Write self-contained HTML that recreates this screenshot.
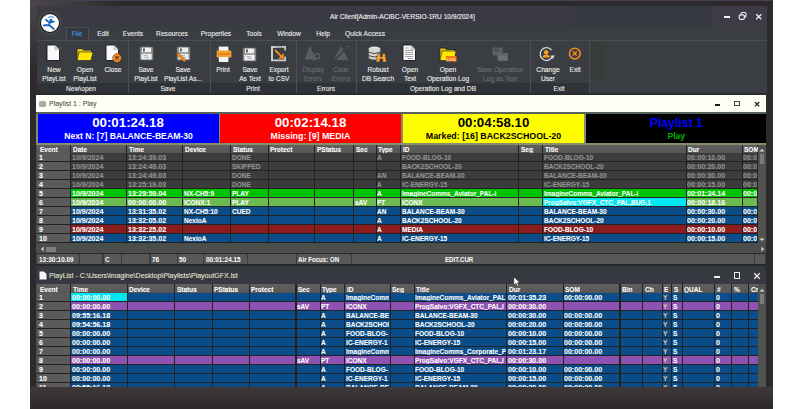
<!DOCTYPE html><html><head><meta charset="utf-8"><style>*{margin:0;padding:0}
html,body{width:800px;height:409px;overflow:hidden;background:#fff}
body{position:relative;font-family:"Liberation Sans",sans-serif}
.a{position:absolute}
.t{position:absolute;white-space:nowrap;line-height:1}
.cl{position:absolute;overflow:hidden}
.c{position:absolute;white-space:nowrap;line-height:1;transform-origin:0 0}
</style></head><body><div class="a" style="left:30px;top:0px;width:743px;height:409px;background:#2e2a2b"></div>
<div class="a" style="left:30px;top:0px;width:120px;height:80px;background:radial-gradient(ellipse 90px 70px at 0 0,#4a4649 0%,#403c3e 45%,#2e2a2b 100%)"></div>
<div class="a" style="left:30px;top:0px;width:743px;height:1px;background:#45414a"></div>
<div class="a" style="left:36.5px;top:5.5px;width:730.5px;height:89px;background:#3a3d42"></div>
<div class="a" style="left:36.5px;top:5.5px;width:730.5px;height:21.5px;background:#3a3a44"></div>
<div class="a" style="left:573.5px;top:5.5px;width:137px;height:21.5px;background:#353a41"></div>
<div class="a" style="left:37.5px;top:10.5px;width:24px;height:24px;background:#47484d;border-radius:50%"></div>
<div class="a" style="left:39.5px;top:12.5px;width:20px;height:20px;background:#151515;border-radius:50%"></div>
<div class="a" style="left:40.5px;top:13.5px;width:18px;height:18px;background:#fbfbfb;border-radius:50%"><svg width="18" height="18" viewBox="0 0 18 18"><path d="M7 3.6 Q10 1.6 13 3.8" stroke="#5aa6e6" stroke-width="1.1" fill="none"/><circle cx="9.9" cy="6.2" r="1.4" fill="#1b64c0"/><path d="M5 5.8 L8.3 8.6 L12.8 7.6 M9.4 7.6 L8 11 L2.8 11.3 M8 11 L12.8 15" stroke="#1b64c0" stroke-width="1.8" fill="none" stroke-linecap="round" stroke-linejoin="round"/></svg></div>
<div class="t" style="left:330px;top:12.5px;color:#f2f2f2;font-size:7.4px;-webkit-text-stroke:0.12px currentColor;transform:scaleX(0.89);transform-origin:0 0">Air Client[Admin-ACIBC-VERSIO-1RU 10/9/2024]</div>
<div class="a" style="left:710.5px;top:5.5px;width:56.5px;height:21.5px;background:#3c3b46"></div>
<div class="a" style="left:723.5px;top:15.8px;width:6.5px;height:1.8px;background:#f2f2f2"></div>
<svg class="a" style="left:737.5px;top:11px" width="10" height="10" viewBox="0 0 10 10"><rect x="3" y="1.5" width="5" height="4.5" rx="1.2" stroke="#eee" stroke-width="1.2" fill="none"/><rect x="1.3" y="3.8" width="5" height="4.5" rx="1.2" stroke="#eee" stroke-width="1.2" fill="#3d3c46"/></svg>
<svg class="a" style="left:754px;top:11.5px" width="10" height="10" viewBox="0 0 10 10"><path d="M2.2 2.2 L7.3 7.3 M7.3 2.2 L2.2 7.3" stroke="#f0f0f0" stroke-width="1.3"/></svg>
<div class="a" style="left:65.5px;top:27px;width:23px;height:13px;background:#363a40;border:1px solid #4b4f55;border-bottom:none;box-sizing:border-box"></div>
<div class="t" style="left:37px;top:30.2px;width:80px;text-align:center;color:#3d9ae0;font-size:7.4px;-webkit-text-stroke:0.12px currentColor;transform:scaleX(0.9);transform-origin:50% 0">File</div>
<div class="t" style="left:62.5px;top:30.2px;width:80px;text-align:center;color:#ececec;font-size:7.4px;-webkit-text-stroke:0.12px currentColor;transform:scaleX(0.9);transform-origin:50% 0">Edit</div>
<div class="t" style="left:92.5px;top:30.2px;width:80px;text-align:center;color:#ececec;font-size:7.4px;-webkit-text-stroke:0.12px currentColor;transform:scaleX(0.9);transform-origin:50% 0">Events</div>
<div class="t" style="left:131.5px;top:30.2px;width:80px;text-align:center;color:#ececec;font-size:7.4px;-webkit-text-stroke:0.12px currentColor;transform:scaleX(0.9);transform-origin:50% 0">Resources</div>
<div class="t" style="left:176px;top:30.2px;width:80px;text-align:center;color:#ececec;font-size:7.4px;-webkit-text-stroke:0.12px currentColor;transform:scaleX(0.9);transform-origin:50% 0">Properties</div>
<div class="t" style="left:213.5px;top:30.2px;width:80px;text-align:center;color:#ececec;font-size:7.4px;-webkit-text-stroke:0.12px currentColor;transform:scaleX(0.9);transform-origin:50% 0">Tools</div>
<div class="t" style="left:248.5px;top:30.2px;width:80px;text-align:center;color:#ececec;font-size:7.4px;-webkit-text-stroke:0.12px currentColor;transform:scaleX(0.9);transform-origin:50% 0">Window</div>
<div class="t" style="left:283px;top:30.2px;width:80px;text-align:center;color:#ececec;font-size:7.4px;-webkit-text-stroke:0.12px currentColor;transform:scaleX(0.9);transform-origin:50% 0">Help</div>
<div class="t" style="left:324.5px;top:30.2px;width:80px;text-align:center;color:#ececec;font-size:7.4px;-webkit-text-stroke:0.12px currentColor;transform:scaleX(0.9);transform-origin:50% 0">Quick Access</div>
<div class="a" style="left:36.5px;top:39.5px;width:730.5px;height:1px;background:#4b4e54"></div>
<div class="a" style="left:590px;top:42px;width:15px;height:38px;background:#383d3a"></div>
<div class="a" style="left:36.5px;top:82.5px;width:552.5px;height:10.5px;background:#2f3237"></div>
<div class="a" style="left:128px;top:40.5px;width:1px;height:52.5px;background:#4c4f55"></div>
<div class="a" style="left:210px;top:40.5px;width:1px;height:52.5px;background:#4c4f55"></div>
<div class="a" style="left:296px;top:40.5px;width:1px;height:52.5px;background:#4c4f55"></div>
<div class="a" style="left:356px;top:40.5px;width:1px;height:52.5px;background:#4c4f55"></div>
<div class="a" style="left:530px;top:40.5px;width:1px;height:52.5px;background:#4c4f55"></div>
<div class="a" style="left:588.5px;top:40.5px;width:1px;height:52.5px;background:#4c4f55"></div>
<div class="a" style="left:36.5px;top:93px;width:730.5px;height:2px;background:#292b2f"></div>
<div class="t" style="left:21px;top:85px;width:120px;text-align:center;color:#ececec;font-size:7.4px;-webkit-text-stroke:0.12px currentColor;transform:scaleX(0.9);transform-origin:50% 0">New\open</div>
<div class="t" style="left:108px;top:85px;width:120px;text-align:center;color:#ececec;font-size:7.4px;-webkit-text-stroke:0.12px currentColor;transform:scaleX(0.9);transform-origin:50% 0">Save</div>
<div class="t" style="left:193px;top:85px;width:120px;text-align:center;color:#ececec;font-size:7.4px;-webkit-text-stroke:0.12px currentColor;transform:scaleX(0.9);transform-origin:50% 0">Print</div>
<div class="t" style="left:266px;top:85px;width:120px;text-align:center;color:#ececec;font-size:7.4px;-webkit-text-stroke:0.12px currentColor;transform:scaleX(0.9);transform-origin:50% 0">Errors</div>
<div class="t" style="left:382.5px;top:85px;width:120px;text-align:center;color:#ececec;font-size:7.4px;-webkit-text-stroke:0.12px currentColor;transform:scaleX(0.9);transform-origin:50% 0">Operation Log and DB</div>
<div class="t" style="left:499px;top:85px;width:120px;text-align:center;color:#ececec;font-size:7.4px;-webkit-text-stroke:0.12px currentColor;transform:scaleX(0.9);transform-origin:50% 0">Exit</div>
<div class="t" style="left:14px;top:66px;width:80px;text-align:center;color:#f0f0f0;line-height:8.5px;font-size:7.4px;-webkit-text-stroke:0.12px currentColor;transform:scaleX(0.9);transform-origin:50% 0">New<br>PlayList</div>
<div class="t" style="left:45px;top:66px;width:80px;text-align:center;color:#f0f0f0;line-height:8.5px;font-size:7.4px;-webkit-text-stroke:0.12px currentColor;transform:scaleX(0.9);transform-origin:50% 0">Open<br>PlayList</div>
<div class="t" style="left:72.5px;top:66px;width:80px;text-align:center;color:#f0f0f0;line-height:8.5px;font-size:7.4px;-webkit-text-stroke:0.12px currentColor;transform:scaleX(0.9);transform-origin:50% 0">Close</div>
<div class="t" style="left:106px;top:66px;width:80px;text-align:center;color:#f0f0f0;line-height:8.5px;font-size:7.4px;-webkit-text-stroke:0.12px currentColor;transform:scaleX(0.9);transform-origin:50% 0">Save<br>PlayList</div>
<div class="t" style="left:143px;top:66px;width:80px;text-align:center;color:#f0f0f0;line-height:8.5px;font-size:7.4px;-webkit-text-stroke:0.12px currentColor;transform:scaleX(0.9);transform-origin:50% 0">Save<br>PlayList As...</div>
<div class="t" style="left:183px;top:66px;width:80px;text-align:center;color:#f0f0f0;line-height:8.5px;font-size:7.4px;-webkit-text-stroke:0.12px currentColor;transform:scaleX(0.9);transform-origin:50% 0">Print</div>
<div class="t" style="left:209.5px;top:66px;width:80px;text-align:center;color:#f0f0f0;line-height:8.5px;font-size:7.4px;-webkit-text-stroke:0.12px currentColor;transform:scaleX(0.9);transform-origin:50% 0">Save<br>As Text</div>
<div class="t" style="left:239px;top:66px;width:80px;text-align:center;color:#f0f0f0;line-height:8.5px;font-size:7.4px;-webkit-text-stroke:0.12px currentColor;transform:scaleX(0.9);transform-origin:50% 0">Export<br>to CSV</div>
<div class="t" style="left:272.5px;top:66px;width:80px;text-align:center;color:#6c6f74;line-height:8.5px;font-size:7.4px;-webkit-text-stroke:0.12px currentColor;transform:scaleX(0.9);transform-origin:50% 0">Display<br>Errors</div>
<div class="t" style="left:301px;top:66px;width:80px;text-align:center;color:#6c6f74;line-height:8.5px;font-size:7.4px;-webkit-text-stroke:0.12px currentColor;transform:scaleX(0.9);transform-origin:50% 0">Clear<br>Errors</div>
<div class="t" style="left:337.5px;top:66px;width:80px;text-align:center;color:#f0f0f0;line-height:8.5px;font-size:7.4px;-webkit-text-stroke:0.12px currentColor;transform:scaleX(0.9);transform-origin:50% 0">Robust<br>DB Search</div>
<div class="t" style="left:369.5px;top:66px;width:80px;text-align:center;color:#f0f0f0;line-height:8.5px;font-size:7.4px;-webkit-text-stroke:0.12px currentColor;transform:scaleX(0.9);transform-origin:50% 0">Open<br>Text</div>
<div class="t" style="left:407.5px;top:66px;width:80px;text-align:center;color:#f0f0f0;line-height:8.5px;font-size:7.4px;-webkit-text-stroke:0.12px currentColor;transform:scaleX(0.9);transform-origin:50% 0">Open<br>Operation Log</div>
<div class="t" style="left:460px;top:66px;width:80px;text-align:center;color:#6c6f74;line-height:8.5px;font-size:7.4px;-webkit-text-stroke:0.12px currentColor;transform:scaleX(0.9);transform-origin:50% 0">Save Operation<br>Log as Text</div>
<div class="t" style="left:507.5px;top:66px;width:80px;text-align:center;color:#f0f0f0;line-height:8.5px;font-size:7.4px;-webkit-text-stroke:0.12px currentColor;transform:scaleX(0.9);transform-origin:50% 0">Change<br>User</div>
<div class="t" style="left:534.5px;top:66px;width:80px;text-align:center;color:#f0f0f0;line-height:8.5px;font-size:7.4px;-webkit-text-stroke:0.12px currentColor;transform:scaleX(0.9);transform-origin:50% 0">Exit</div>
<svg class="a" style="left:46px;top:44px" width="15" height="18" viewBox="0 0 15 18"><path d="M1 1 H9 L13.5 5.5 V16.5 H1 Z" fill="#fafafa" stroke="#161616" stroke-width="0.9"/><path d="M9 1 V5.5 H13.5" fill="#d8d8d8" stroke="#9a9a9a" stroke-width="0.5"/></svg>
<svg class="a" style="left:76px;top:46.5px" width="18" height="15" viewBox="0 0 18 15"><path d="M1 1.5 H6 L7.5 3 H15.5 V13.5 H1 Z" fill="#e6c200" stroke="#1a1a48" stroke-width="0.8"/><path d="M3 5 H17 L15 13.5 H1.2 Z" fill="#ffe800" stroke="#1a1a48" stroke-width="0.6"/></svg>
<svg class="a" style="left:104.5px;top:43.5px" width="18" height="19" viewBox="0 0 18 19"><path d="M1 1 H9 L13.5 5.5 V16.5 H1 Z" fill="#fafafa" stroke="#161616" stroke-width="0.9"/><path d="M9 1 V5.5 H13.5" fill="#d8d8d8" stroke="#9a9a9a" stroke-width="0.5"/><circle cx="12" cy="14" r="4.4" fill="#f28a1e" stroke="#2a2a2a" stroke-width="0.4"/><path d="M10.4 12.4 L13.6 15.6 M13.6 12.4 L10.4 15.6" stroke="#1e2a3a" stroke-width="1.1"/></svg>
<svg class="a" style="left:138.5px;top:46.2px" width="15" height="15" viewBox="0 0 15 15"><rect x="0.8" y="0.8" width="13.4" height="13.4" rx="1" fill="#8f8f8f" stroke="#4a4a4a" stroke-width="0.6"/><rect x="3" y="1.6" width="9" height="4.6" fill="#f0f0f0"/><rect x="4.2" y="2.4" width="1.5" height="3" fill="#333"/><rect x="2.4" y="7.8" width="10.2" height="5.6" fill="#f0f0f0"/><path d="M4.5 9.6 H9 M5.5 11.4 H10" stroke="#9a9a9a" stroke-width="0.8"/></svg>
<svg class="a" style="left:176px;top:46.2px" width="16" height="17" viewBox="0 0 16 17"><rect x="0.8" y="0.8" width="13.4" height="13.4" rx="1" fill="#8f8f8f" stroke="#4a4a4a" stroke-width="0.6"/><rect x="3" y="1.6" width="9" height="4.6" fill="#f0f0f0"/><rect x="4.2" y="2.4" width="1.5" height="3" fill="#333"/><rect x="2.4" y="7.8" width="10.2" height="5.6" fill="#f0f0f0"/><path d="M4.5 9.6 H9 M5.5 11.4 H10" stroke="#9a9a9a" stroke-width="0.8"/><path d="M0.5 8.5 L2.5 6.8 L9.5 13.8 L9.8 16 L7.6 15.5 Z" fill="#f28a1e" stroke="#3a2412" stroke-width="0.3"/></svg>
<svg class="a" style="left:215.5px;top:45.5px" width="16" height="17" viewBox="0 0 16 17"><rect x="2.8" y="0.6" width="9.6" height="5" fill="#f4f4f4"/><path d="M2.8 0.6 L0.8 3 V5" stroke="#777" stroke-width="0.4" fill="none"/><rect x="0.6" y="4.6" width="14.8" height="7" rx="1.3" fill="#f5a030"/><rect x="1.6" y="7.2" width="12.8" height="1.4" fill="#e07a10"/><rect x="2.8" y="11" width="9.6" height="5" fill="#f4f4f4"/></svg>
<svg class="a" style="left:241.5px;top:46.5px" width="15" height="15" viewBox="0 0 15 15"><rect x="0.8" y="0.8" width="13.4" height="13.4" rx="1" fill="#8f8f8f" stroke="#4a4a4a" stroke-width="0.6"/><rect x="3" y="1.6" width="9" height="4.6" fill="#f0f0f0"/><rect x="4.2" y="2.4" width="1.5" height="3" fill="#333"/><rect x="2.4" y="7.8" width="10.2" height="5.6" fill="#f0f0f0"/><path d="M4.5 9.6 H9 M5.5 11.4 H10" stroke="#9a9a9a" stroke-width="0.8"/></svg>
<svg class="a" style="left:271px;top:46px" width="15" height="15.5" viewBox="0 0 15 15.5"><path d="M10.5 0.9 H14.1 V4.5 M14.1 10.5 V14.3 H0.9 V0.9 H4.5" fill="none" stroke="#cfcfcf" stroke-width="1.7"/><path d="M1 1 H10.5 M1 1 V14" stroke="#cfcfcf" stroke-width="1.7"/><path d="M4 4 L11.5 11.5" stroke="#f28a1e" stroke-width="2"/><path d="M12.8 7 V12.8 H7 Z" fill="#f28a1e"/></svg>
<svg class="a" style="left:303.5px;top:45px" width="17" height="17" viewBox="0 0 17 17"><path d="M6 0.8 L12 14.5 H0.5 Z" fill="#595c61"/><circle cx="13.2" cy="11.2" r="2.6" fill="#3a3d42" stroke="#5d6065" stroke-width="1.4"/><path d="M11.3 13.3 L9.3 15.8" stroke="#5d6065" stroke-width="1.4"/></svg>
<svg class="a" style="left:332.5px;top:45px" width="16" height="16" viewBox="0 0 16 16"><path d="M8 1 L15.5 15 H0.5 Z" fill="#595c61"/><path d="M15 1 L1.5 15.5" stroke="#3a3d42" stroke-width="1.8"/><path d="M15.5 0.5 L14 2.3" stroke="#595c61" stroke-width="1.2"/></svg>
<svg class="a" style="left:367.5px;top:45.5px" width="20" height="17" viewBox="0 0 20 17"><ellipse cx="6.5" cy="2.6" rx="6" ry="2.3" fill="#e8e8e8" stroke="#333" stroke-width="0.5"/><path d="M0.5 2.6 V12.5 Q6.5 15.5 12.5 12.5 V2.6" fill="#d4d4d4" stroke="#333" stroke-width="0.5"/><path d="M0.5 6.2 Q6.5 9.2 12.5 6.2 M0.5 9.6 Q6.5 12.6 12.5 9.6" stroke="#333" stroke-width="0.9" fill="none"/><path d="M8 16 L9.5 7.5 L11.8 7.5 L12.5 11 L14 11 L14.7 7.5 L17 7.5 L18.5 16 L15 16 L14.4 13 L12.1 13 L11.5 16 Z" fill="#f5a030" stroke="#2a2a2a" stroke-width="0.4"/></svg>
<svg class="a" style="left:401.5px;top:44px" width="15" height="18" viewBox="0 0 15 18"><path d="M1 1 H9 L13.5 5.5 V16.5 H1 Z" fill="#fafafa" stroke="#161616" stroke-width="0.9"/><path d="M9 1 V5.5 H13.5" fill="#d8d8d8" stroke="#9a9a9a" stroke-width="0.5"/><path d="M3 4 H7 M3 6.5 H11 M3 8.5 H11 M3 10.5 H11 M3 12.5 H11 M5.5 14.5 H11" stroke="#8a8a8a" stroke-width="0.8"/></svg>
<svg class="a" style="left:439px;top:46.5px" width="18" height="15" viewBox="0 0 18 15"><path d="M0.8 1 H6 L7.5 2.5 H15.5 V13.5 H0.8 Z" fill="#e6c200" stroke="#1a1a48" stroke-width="0.8"/><path d="M3 4 H17 L15 13.5 H1 Z" fill="#ffe800" stroke="#1a1a48" stroke-width="0.6"/><rect x="7" y="9" width="10.5" height="5.5" fill="#f07a10"/><text x="12.3" y="13.6" font-size="4.2" font-weight="bold" text-anchor="middle" fill="#ffe0c0" font-family="Liberation Sans">LOG</text></svg>
<svg class="a" style="left:491.5px;top:47px" width="17" height="14.5" viewBox="0 0 17 14.5"><rect x="0.5" y="0.5" width="10" height="8" fill="#5d6065"/><rect x="2" y="1.5" width="5" height="3" fill="#4a4d52"/><rect x="5.5" y="6" width="10.5" height="8" fill="#62656a"/><rect x="7" y="9" width="7.5" height="4" fill="#6c6f74"/></svg>
<svg class="a" style="left:538px;top:45.5px" width="19" height="16" viewBox="0 0 19 16"><path d="M13.5 4 A6.4 6.4 0 1 0 14.5 10.5" fill="none" stroke="#d8d8d8" stroke-width="1.3"/><path d="M12.3 9.8 L16.8 9.2 L14.8 13.2 Z" fill="#d8d8d8"/><circle cx="8.2" cy="6.2" r="2.2" fill="#f5a020"/><path d="M4.5 11.5 Q4.8 8.6 8.2 8.6 Q11.6 8.6 11.9 11.5 Z" fill="#f5a020"/></svg>
<svg class="a" style="left:568px;top:46.5px" width="14" height="14" viewBox="0 0 14 14"><circle cx="6.8" cy="6.6" r="5.4" fill="none" stroke="#f28a1e" stroke-width="1.6"/><path d="M4.8 4.6 L8.8 8.6 M8.8 4.6 L4.8 8.6" stroke="#f28a1e" stroke-width="1.4"/></svg>
<div class="a" style="left:36px;top:95px;width:730px;height:17px;background:#fefef3"></div>
<div class="a" style="left:38.5px;top:100.5px;width:7px;height:6px;background:#aaaaaa;border-radius:1.5px"></div>
<div class="t" style="left:49px;top:99.8px;color:#505050;font-size:7.6px;-webkit-text-stroke:0.1px #505050;transform:scaleX(0.92);transform-origin:0 0">Playlist 1 : Play</div>
<div class="a" style="left:714.6px;top:104px;width:5px;height:1.6px;background:#1a1a1a"></div>
<div class="a" style="left:734.3px;top:101.2px;width:5.3px;height:4.8px;border:1px solid #444;border-top-width:1.8px;box-sizing:border-box"></div>
<svg class="a" style="left:754px;top:100.5px" width="6.5" height="6.5" viewBox="0 0 6.5 6.5"><path d="M1 1 L5.3 5.3 M5.3 1 L1 5.3" stroke="#1a1a1a" stroke-width="1.2"/></svg>
<div class="a" style="left:36px;top:112px;width:730px;height:32.5px;background:#868e6c"></div>
<div class="a" style="left:36px;top:112px;width:730px;height:1.5px;background:#56625a"></div>
<div class="a" style="left:37.5px;top:113.6px;width:181px;height:29.5px;background:#0000fe"></div>
<div class="t" style="left:37.5px;top:115.5px;width:181px;text-align:center;color:#fff;font-size:13.3px;font-weight:bold">00:01:24.18</div>
<div class="t" style="left:37.5px;top:132.1px;width:181px;text-align:center;color:#fff;font-size:9px;font-weight:bold;transform:scaleX(0.96);transform-origin:50% 0">Next N: [7] BALANCE-BEAM-30</div>
<div class="a" style="left:220px;top:113.6px;width:181px;height:29.5px;background:#fe0000"></div>
<div class="t" style="left:220px;top:115.5px;width:181px;text-align:center;color:#fff;font-size:13.3px;font-weight:bold">00:02:14.18</div>
<div class="t" style="left:220px;top:132.1px;width:181px;text-align:center;color:#fff;font-size:9px;font-weight:bold;transform:scaleX(0.98);transform-origin:50% 0">Missing: [9] MEDIA</div>
<div class="a" style="left:403px;top:113.6px;width:181px;height:29.5px;background:#fefe00"></div>
<div class="t" style="left:403px;top:115.5px;width:181px;text-align:center;color:#000;font-size:13.3px;font-weight:bold">00:04:58.10</div>
<div class="t" style="left:403px;top:132.1px;width:181px;text-align:center;color:#000;font-size:9px;font-weight:bold;transform:scaleX(0.98);transform-origin:50% 0">Marked: [16] BACK2SCHOOL-20</div>
<div class="a" style="left:585.5px;top:113.6px;width:180.5px;height:29.5px;background:#000000"></div>
<div class="t" style="left:585.5px;top:115.5px;width:180.5px;text-align:center;color:#0000ff;font-size:13.3px;font-weight:bold;transform:scaleX(0.92);transform-origin:50% 0">Playlist 1</div>
<div class="t" style="left:585.5px;top:132.1px;width:180.5px;text-align:center;color:#00b000;font-size:9px;font-weight:bold;transform:scaleX(0.95);transform-origin:50% 0">Play</div>
<div class="a" style="left:37px;top:144.5px;width:720.5px;height:99.0px;background:#222222"></div>
<div class="a" style="left:37px;top:144.5px;width:33px;height:8.5px;background:linear-gradient(#606060,#565656)"></div>
<div class="c" style="left:39.5px;top:146.3px;color:#fff;font-size:7.4px;font-weight:bold;-webkit-text-stroke:0.08px currentColor;transform:scaleX(0.88)">Event</div>
<div class="a" style="left:71px;top:144.5px;width:55px;height:8.5px;background:linear-gradient(#606060,#565656)"></div>
<div class="c" style="left:72.5px;top:146.3px;color:#fff;font-size:7.4px;font-weight:bold;-webkit-text-stroke:0.08px currentColor;transform:scaleX(0.88)">Date</div>
<div class="a" style="left:127px;top:144.5px;width:55px;height:8.5px;background:linear-gradient(#606060,#565656)"></div>
<div class="c" style="left:128.5px;top:146.3px;color:#fff;font-size:7.4px;font-weight:bold;-webkit-text-stroke:0.08px currentColor;transform:scaleX(0.88)">Time</div>
<div class="a" style="left:183px;top:144.5px;width:47px;height:8.5px;background:linear-gradient(#606060,#565656)"></div>
<div class="c" style="left:184.5px;top:146.3px;color:#fff;font-size:7.4px;font-weight:bold;-webkit-text-stroke:0.08px currentColor;transform:scaleX(0.88)">Device</div>
<div class="a" style="left:231px;top:144.5px;width:36.5px;height:8.5px;background:linear-gradient(#606060,#565656)"></div>
<div class="c" style="left:232.5px;top:146.3px;color:#fff;font-size:7.4px;font-weight:bold;-webkit-text-stroke:0.08px currentColor;transform:scaleX(0.88)">Status</div>
<div class="a" style="left:268.5px;top:144.5px;width:45.5px;height:8.5px;background:linear-gradient(#606060,#565656)"></div>
<div class="c" style="left:270.0px;top:146.3px;color:#fff;font-size:7.4px;font-weight:bold;-webkit-text-stroke:0.08px currentColor;transform:scaleX(0.88)">Protect</div>
<div class="a" style="left:315px;top:144.5px;width:38px;height:8.5px;background:linear-gradient(#606060,#565656)"></div>
<div class="c" style="left:316.5px;top:146.3px;color:#fff;font-size:7.4px;font-weight:bold;-webkit-text-stroke:0.08px currentColor;transform:scaleX(0.88)">PStatus</div>
<div class="a" style="left:354px;top:144.5px;width:21.5px;height:8.5px;background:linear-gradient(#606060,#565656)"></div>
<div class="c" style="left:355.5px;top:146.3px;color:#fff;font-size:7.4px;font-weight:bold;-webkit-text-stroke:0.08px currentColor;transform:scaleX(0.88)">Sec</div>
<div class="a" style="left:376.5px;top:144.5px;width:23.5px;height:8.5px;background:linear-gradient(#606060,#565656)"></div>
<div class="c" style="left:378.0px;top:146.3px;color:#fff;font-size:7.4px;font-weight:bold;-webkit-text-stroke:0.08px currentColor;transform:scaleX(0.88)">Type</div>
<div class="a" style="left:401px;top:144.5px;width:117px;height:8.5px;background:linear-gradient(#606060,#565656)"></div>
<div class="c" style="left:402.5px;top:146.3px;color:#fff;font-size:7.4px;font-weight:bold;-webkit-text-stroke:0.08px currentColor;transform:scaleX(0.88)">ID</div>
<div class="a" style="left:519px;top:144.5px;width:23px;height:8.5px;background:linear-gradient(#606060,#565656)"></div>
<div class="c" style="left:520.5px;top:146.3px;color:#fff;font-size:7.4px;font-weight:bold;-webkit-text-stroke:0.08px currentColor;transform:scaleX(0.88)">Seg</div>
<div class="a" style="left:543px;top:144.5px;width:142.5px;height:8.5px;background:linear-gradient(#606060,#565656)"></div>
<div class="c" style="left:544.5px;top:146.3px;color:#fff;font-size:7.4px;font-weight:bold;-webkit-text-stroke:0.08px currentColor;transform:scaleX(0.88)">Title</div>
<div class="a" style="left:686.5px;top:144.5px;width:55.200000000000045px;height:8.5px;background:linear-gradient(#606060,#565656)"></div>
<div class="c" style="left:688.0px;top:146.3px;color:#fff;font-size:7.4px;font-weight:bold;-webkit-text-stroke:0.08px currentColor;transform:scaleX(0.88)">Dur</div>
<div class="a" style="left:742.7px;top:144.5px;width:14.799999999999955px;height:8.5px;background:linear-gradient(#606060,#565656)"></div>
<div class="c" style="left:744.2px;top:146.3px;color:#fff;font-size:7.4px;font-weight:bold;-webkit-text-stroke:0.08px currentColor;transform:scaleX(0.88)">SOM</div>
<div class="a" style="left:37px;top:153.0px;width:33px;height:8px;background:#5b5b5b"></div>
<div class="a" style="left:71px;top:153.0px;width:55px;height:8px;background:#3c3c3c"></div>
<div class="a" style="left:127px;top:153.0px;width:55px;height:8px;background:#3c3c3c"></div>
<div class="a" style="left:183px;top:153.0px;width:47px;height:8px;background:#3c3c3c"></div>
<div class="a" style="left:231px;top:153.0px;width:36.5px;height:8px;background:#3c3c3c"></div>
<div class="a" style="left:268.5px;top:153.0px;width:45.5px;height:8px;background:#3c3c3c"></div>
<div class="a" style="left:315px;top:153.0px;width:38px;height:8px;background:#3c3c3c"></div>
<div class="a" style="left:354px;top:153.0px;width:21.5px;height:8px;background:#3c3c3c"></div>
<div class="a" style="left:376.5px;top:153.0px;width:23.5px;height:8px;background:#3c3c3c"></div>
<div class="a" style="left:401px;top:153.0px;width:117px;height:8px;background:#3c3c3c"></div>
<div class="a" style="left:519px;top:153.0px;width:23px;height:8px;background:#3c3c3c"></div>
<div class="a" style="left:543px;top:153.0px;width:142.5px;height:8px;background:#3c3c3c"></div>
<div class="a" style="left:686.5px;top:153.0px;width:55.200000000000045px;height:8px;background:#3c3c3c"></div>
<div class="a" style="left:742.7px;top:153.0px;width:14.799999999999955px;height:8px;background:#3c3c3c"></div>
<div class="cl" style="left:38px;top:153.0px;width:31.8px;height:8px"><div class="c" style="left:0.5px;top:1.25px;color:#ffffff;font-size:7.4px;font-weight:bold;-webkit-text-stroke:0.08px currentColor;transform:scaleX(0.955)">1</div></div>
<div class="cl" style="left:71px;top:153.0px;width:54.8px;height:8px"><div class="c" style="left:0.5px;top:1.25px;color:#939393;font-size:7.4px;font-weight:bold;-webkit-text-stroke:0.08px currentColor;transform:scaleX(0.955)">10/9/2024</div></div>
<div class="cl" style="left:127px;top:153.0px;width:54.8px;height:8px"><div class="c" style="left:0.5px;top:1.25px;color:#939393;font-size:7.4px;font-weight:bold;-webkit-text-stroke:0.08px currentColor;transform:scaleX(0.955)">13:24:39.03</div></div>
<div class="cl" style="left:231px;top:153.0px;width:36.3px;height:8px"><div class="c" style="left:0.5px;top:1.25px;color:#939393;font-size:7.4px;font-weight:bold;-webkit-text-stroke:0.08px currentColor;transform:scaleX(0.88)">DONE</div></div>
<div class="cl" style="left:376.5px;top:153.0px;width:23.3px;height:8px"><div class="c" style="left:0.5px;top:1.25px;color:#939393;font-size:7.4px;font-weight:bold;-webkit-text-stroke:0.08px currentColor;transform:scaleX(0.88)">A</div></div>
<div class="cl" style="left:401px;top:153.0px;width:116.8px;height:8px"><div class="c" style="left:0.5px;top:1.25px;color:#939393;font-size:7.4px;font-weight:bold;-webkit-text-stroke:0.08px currentColor;transform:scaleX(0.88)">FOOD-BLOG-10</div></div>
<div class="cl" style="left:543px;top:153.0px;width:142.3px;height:8px"><div class="c" style="left:0.5px;top:1.25px;color:#939393;font-size:7.4px;font-weight:bold;-webkit-text-stroke:0.08px currentColor;transform:scaleX(0.88)">FOOD-BLOG-10</div></div>
<div class="cl" style="left:686.5px;top:153.0px;width:55.00000000000004px;height:8px"><div class="c" style="left:0.5px;top:1.25px;color:#939393;font-size:7.4px;font-weight:bold;-webkit-text-stroke:0.08px currentColor;transform:scaleX(0.955)">00:00:10.00</div></div>
<div class="cl" style="left:742.7px;top:153.0px;width:14.599999999999955px;height:8px"><div class="c" style="left:0.5px;top:1.25px;color:#939393;font-size:7.4px;font-weight:bold;-webkit-text-stroke:0.08px currentColor;transform:scaleX(0.955)">00:00:00.00</div></div>
<div class="a" style="left:37px;top:162.0px;width:33px;height:8px;background:#5b5b5b"></div>
<div class="a" style="left:71px;top:162.0px;width:55px;height:8px;background:#3c3c3c"></div>
<div class="a" style="left:127px;top:162.0px;width:55px;height:8px;background:#3c3c3c"></div>
<div class="a" style="left:183px;top:162.0px;width:47px;height:8px;background:#3c3c3c"></div>
<div class="a" style="left:231px;top:162.0px;width:36.5px;height:8px;background:#3c3c3c"></div>
<div class="a" style="left:268.5px;top:162.0px;width:45.5px;height:8px;background:#3c3c3c"></div>
<div class="a" style="left:315px;top:162.0px;width:38px;height:8px;background:#3c3c3c"></div>
<div class="a" style="left:354px;top:162.0px;width:21.5px;height:8px;background:#3c3c3c"></div>
<div class="a" style="left:376.5px;top:162.0px;width:23.5px;height:8px;background:#3c3c3c"></div>
<div class="a" style="left:401px;top:162.0px;width:117px;height:8px;background:#3c3c3c"></div>
<div class="a" style="left:519px;top:162.0px;width:23px;height:8px;background:#3c3c3c"></div>
<div class="a" style="left:543px;top:162.0px;width:142.5px;height:8px;background:#3c3c3c"></div>
<div class="a" style="left:686.5px;top:162.0px;width:55.200000000000045px;height:8px;background:#3c3c3c"></div>
<div class="a" style="left:742.7px;top:162.0px;width:14.799999999999955px;height:8px;background:#3c3c3c"></div>
<div class="cl" style="left:38px;top:162.0px;width:31.8px;height:8px"><div class="c" style="left:0.5px;top:1.25px;color:#ffffff;font-size:7.4px;font-weight:bold;-webkit-text-stroke:0.08px currentColor;transform:scaleX(0.955)">2</div></div>
<div class="cl" style="left:71px;top:162.0px;width:54.8px;height:8px"><div class="c" style="left:0.5px;top:1.25px;color:#939393;font-size:7.4px;font-weight:bold;-webkit-text-stroke:0.08px currentColor;transform:scaleX(0.955)">10/9/2024</div></div>
<div class="cl" style="left:127px;top:162.0px;width:54.8px;height:8px"><div class="c" style="left:0.5px;top:1.25px;color:#939393;font-size:7.4px;font-weight:bold;-webkit-text-stroke:0.08px currentColor;transform:scaleX(0.955)">13:24:49.03</div></div>
<div class="cl" style="left:231px;top:162.0px;width:36.3px;height:8px"><div class="c" style="left:0.5px;top:1.25px;color:#939393;font-size:7.4px;font-weight:bold;-webkit-text-stroke:0.08px currentColor;transform:scaleX(0.88)">SKIPPED</div></div>
<div class="cl" style="left:401px;top:162.0px;width:116.8px;height:8px"><div class="c" style="left:0.5px;top:1.25px;color:#939393;font-size:7.4px;font-weight:bold;-webkit-text-stroke:0.08px currentColor;transform:scaleX(0.88)">BACK2SCHOOL-20</div></div>
<div class="cl" style="left:543px;top:162.0px;width:142.3px;height:8px"><div class="c" style="left:0.5px;top:1.25px;color:#939393;font-size:7.4px;font-weight:bold;-webkit-text-stroke:0.08px currentColor;transform:scaleX(0.88)">BACK2SCHOOL-20</div></div>
<div class="cl" style="left:686.5px;top:162.0px;width:55.00000000000004px;height:8px"><div class="c" style="left:0.5px;top:1.25px;color:#939393;font-size:7.4px;font-weight:bold;-webkit-text-stroke:0.08px currentColor;transform:scaleX(0.955)">00:00:20.00</div></div>
<div class="cl" style="left:742.7px;top:162.0px;width:14.599999999999955px;height:8px"><div class="c" style="left:0.5px;top:1.25px;color:#939393;font-size:7.4px;font-weight:bold;-webkit-text-stroke:0.08px currentColor;transform:scaleX(0.955)">00:00:00.00</div></div>
<div class="a" style="left:37px;top:171.0px;width:33px;height:8px;background:#5b5b5b"></div>
<div class="a" style="left:71px;top:171.0px;width:55px;height:8px;background:#3c3c3c"></div>
<div class="a" style="left:127px;top:171.0px;width:55px;height:8px;background:#3c3c3c"></div>
<div class="a" style="left:183px;top:171.0px;width:47px;height:8px;background:#3c3c3c"></div>
<div class="a" style="left:231px;top:171.0px;width:36.5px;height:8px;background:#3c3c3c"></div>
<div class="a" style="left:268.5px;top:171.0px;width:45.5px;height:8px;background:#3c3c3c"></div>
<div class="a" style="left:315px;top:171.0px;width:38px;height:8px;background:#3c3c3c"></div>
<div class="a" style="left:354px;top:171.0px;width:21.5px;height:8px;background:#3c3c3c"></div>
<div class="a" style="left:376.5px;top:171.0px;width:23.5px;height:8px;background:#3c3c3c"></div>
<div class="a" style="left:401px;top:171.0px;width:117px;height:8px;background:#3c3c3c"></div>
<div class="a" style="left:519px;top:171.0px;width:23px;height:8px;background:#3c3c3c"></div>
<div class="a" style="left:543px;top:171.0px;width:142.5px;height:8px;background:#3c3c3c"></div>
<div class="a" style="left:686.5px;top:171.0px;width:55.200000000000045px;height:8px;background:#3c3c3c"></div>
<div class="a" style="left:742.7px;top:171.0px;width:14.799999999999955px;height:8px;background:#3c3c3c"></div>
<div class="cl" style="left:38px;top:171.0px;width:31.8px;height:8px"><div class="c" style="left:0.5px;top:1.25px;color:#ffffff;font-size:7.4px;font-weight:bold;-webkit-text-stroke:0.08px currentColor;transform:scaleX(0.955)">3</div></div>
<div class="cl" style="left:71px;top:171.0px;width:54.8px;height:8px"><div class="c" style="left:0.5px;top:1.25px;color:#939393;font-size:7.4px;font-weight:bold;-webkit-text-stroke:0.08px currentColor;transform:scaleX(0.955)">10/9/2024</div></div>
<div class="cl" style="left:127px;top:171.0px;width:54.8px;height:8px"><div class="c" style="left:0.5px;top:1.25px;color:#939393;font-size:7.4px;font-weight:bold;-webkit-text-stroke:0.08px currentColor;transform:scaleX(0.955)">13:24:49.03</div></div>
<div class="cl" style="left:231px;top:171.0px;width:36.3px;height:8px"><div class="c" style="left:0.5px;top:1.25px;color:#939393;font-size:7.4px;font-weight:bold;-webkit-text-stroke:0.08px currentColor;transform:scaleX(0.88)">DONE</div></div>
<div class="cl" style="left:376.5px;top:171.0px;width:23.3px;height:8px"><div class="c" style="left:0.5px;top:1.25px;color:#939393;font-size:7.4px;font-weight:bold;-webkit-text-stroke:0.08px currentColor;transform:scaleX(0.88)">AN</div></div>
<div class="cl" style="left:401px;top:171.0px;width:116.8px;height:8px"><div class="c" style="left:0.5px;top:1.25px;color:#939393;font-size:7.4px;font-weight:bold;-webkit-text-stroke:0.08px currentColor;transform:scaleX(0.88)">BALANCE-BEAM-30</div></div>
<div class="cl" style="left:543px;top:171.0px;width:142.3px;height:8px"><div class="c" style="left:0.5px;top:1.25px;color:#939393;font-size:7.4px;font-weight:bold;-webkit-text-stroke:0.08px currentColor;transform:scaleX(0.88)">BALANCE-BEAM-30</div></div>
<div class="cl" style="left:686.5px;top:171.0px;width:55.00000000000004px;height:8px"><div class="c" style="left:0.5px;top:1.25px;color:#939393;font-size:7.4px;font-weight:bold;-webkit-text-stroke:0.08px currentColor;transform:scaleX(0.955)">00:00:30.00</div></div>
<div class="cl" style="left:742.7px;top:171.0px;width:14.599999999999955px;height:8px"><div class="c" style="left:0.5px;top:1.25px;color:#939393;font-size:7.4px;font-weight:bold;-webkit-text-stroke:0.08px currentColor;transform:scaleX(0.955)">00:00:00.00</div></div>
<div class="a" style="left:37px;top:180.0px;width:33px;height:8px;background:#5b5b5b"></div>
<div class="a" style="left:71px;top:180.0px;width:55px;height:8px;background:#3c3c3c"></div>
<div class="a" style="left:127px;top:180.0px;width:55px;height:8px;background:#3c3c3c"></div>
<div class="a" style="left:183px;top:180.0px;width:47px;height:8px;background:#3c3c3c"></div>
<div class="a" style="left:231px;top:180.0px;width:36.5px;height:8px;background:#3c3c3c"></div>
<div class="a" style="left:268.5px;top:180.0px;width:45.5px;height:8px;background:#3c3c3c"></div>
<div class="a" style="left:315px;top:180.0px;width:38px;height:8px;background:#3c3c3c"></div>
<div class="a" style="left:354px;top:180.0px;width:21.5px;height:8px;background:#3c3c3c"></div>
<div class="a" style="left:376.5px;top:180.0px;width:23.5px;height:8px;background:#3c3c3c"></div>
<div class="a" style="left:401px;top:180.0px;width:117px;height:8px;background:#3c3c3c"></div>
<div class="a" style="left:519px;top:180.0px;width:23px;height:8px;background:#3c3c3c"></div>
<div class="a" style="left:543px;top:180.0px;width:142.5px;height:8px;background:#3c3c3c"></div>
<div class="a" style="left:686.5px;top:180.0px;width:55.200000000000045px;height:8px;background:#3c3c3c"></div>
<div class="a" style="left:742.7px;top:180.0px;width:14.799999999999955px;height:8px;background:#3c3c3c"></div>
<div class="cl" style="left:38px;top:180.0px;width:31.8px;height:8px"><div class="c" style="left:0.5px;top:1.25px;color:#ffffff;font-size:7.4px;font-weight:bold;-webkit-text-stroke:0.08px currentColor;transform:scaleX(0.955)">4</div></div>
<div class="cl" style="left:71px;top:180.0px;width:54.8px;height:8px"><div class="c" style="left:0.5px;top:1.25px;color:#939393;font-size:7.4px;font-weight:bold;-webkit-text-stroke:0.08px currentColor;transform:scaleX(0.955)">10/9/2024</div></div>
<div class="cl" style="left:127px;top:180.0px;width:54.8px;height:8px"><div class="c" style="left:0.5px;top:1.25px;color:#939393;font-size:7.4px;font-weight:bold;-webkit-text-stroke:0.08px currentColor;transform:scaleX(0.955)">13:25:19.03</div></div>
<div class="cl" style="left:231px;top:180.0px;width:36.3px;height:8px"><div class="c" style="left:0.5px;top:1.25px;color:#939393;font-size:7.4px;font-weight:bold;-webkit-text-stroke:0.08px currentColor;transform:scaleX(0.88)">DONE</div></div>
<div class="cl" style="left:376.5px;top:180.0px;width:23.3px;height:8px"><div class="c" style="left:0.5px;top:1.25px;color:#939393;font-size:7.4px;font-weight:bold;-webkit-text-stroke:0.08px currentColor;transform:scaleX(0.88)">A</div></div>
<div class="cl" style="left:401px;top:180.0px;width:116.8px;height:8px"><div class="c" style="left:0.5px;top:1.25px;color:#939393;font-size:7.4px;font-weight:bold;-webkit-text-stroke:0.08px currentColor;transform:scaleX(0.88)">IC-ENERGY-15</div></div>
<div class="cl" style="left:543px;top:180.0px;width:142.3px;height:8px"><div class="c" style="left:0.5px;top:1.25px;color:#939393;font-size:7.4px;font-weight:bold;-webkit-text-stroke:0.08px currentColor;transform:scaleX(0.88)">IC-ENERGY-15</div></div>
<div class="cl" style="left:686.5px;top:180.0px;width:55.00000000000004px;height:8px"><div class="c" style="left:0.5px;top:1.25px;color:#939393;font-size:7.4px;font-weight:bold;-webkit-text-stroke:0.08px currentColor;transform:scaleX(0.955)">00:00:15.00</div></div>
<div class="cl" style="left:742.7px;top:180.0px;width:14.599999999999955px;height:8px"><div class="c" style="left:0.5px;top:1.25px;color:#939393;font-size:7.4px;font-weight:bold;-webkit-text-stroke:0.08px currentColor;transform:scaleX(0.955)">00:00:00.00</div></div>
<div class="a" style="left:37px;top:189.0px;width:33px;height:8px;background:#5b5b5b"></div>
<div class="a" style="left:71px;top:189.0px;width:55px;height:8px;background:#00c300"></div>
<div class="a" style="left:127px;top:189.0px;width:55px;height:8px;background:#00c300"></div>
<div class="a" style="left:183px;top:189.0px;width:47px;height:8px;background:#00c300"></div>
<div class="a" style="left:231px;top:189.0px;width:36.5px;height:8px;background:#00c300"></div>
<div class="a" style="left:268.5px;top:189.0px;width:45.5px;height:8px;background:#00c300"></div>
<div class="a" style="left:315px;top:189.0px;width:38px;height:8px;background:#00c300"></div>
<div class="a" style="left:354px;top:189.0px;width:21.5px;height:8px;background:#00c300"></div>
<div class="a" style="left:376.5px;top:189.0px;width:23.5px;height:8px;background:#00c300"></div>
<div class="a" style="left:401px;top:189.0px;width:117px;height:8px;background:#00c300"></div>
<div class="a" style="left:519px;top:189.0px;width:23px;height:8px;background:#00c300"></div>
<div class="a" style="left:543px;top:189.0px;width:142.5px;height:8px;background:#00c300"></div>
<div class="a" style="left:686.5px;top:189.0px;width:55.200000000000045px;height:8px;background:#00c300"></div>
<div class="a" style="left:742.7px;top:189.0px;width:14.799999999999955px;height:8px;background:#00c300"></div>
<div class="cl" style="left:38px;top:189.0px;width:31.8px;height:8px"><div class="c" style="left:0.5px;top:1.25px;color:#ffffff;font-size:7.4px;font-weight:bold;-webkit-text-stroke:0.08px currentColor;transform:scaleX(0.955)">5</div></div>
<div class="cl" style="left:71px;top:189.0px;width:54.8px;height:8px"><div class="c" style="left:0.5px;top:1.25px;color:#ffffff;font-size:7.4px;font-weight:bold;-webkit-text-stroke:0.08px currentColor;transform:scaleX(0.955)">10/9/2024</div></div>
<div class="cl" style="left:127px;top:189.0px;width:54.8px;height:8px"><div class="c" style="left:0.5px;top:1.25px;color:#ffffff;font-size:7.4px;font-weight:bold;-webkit-text-stroke:0.08px currentColor;transform:scaleX(0.955)">13:29:59.04</div></div>
<div class="cl" style="left:183px;top:189.0px;width:46.8px;height:8px"><div class="c" style="left:0.5px;top:1.25px;color:#ffffff;font-size:7.4px;font-weight:bold;-webkit-text-stroke:0.08px currentColor;transform:scaleX(0.88)">NX-CH5:9</div></div>
<div class="cl" style="left:231px;top:189.0px;width:36.3px;height:8px"><div class="c" style="left:0.5px;top:1.25px;color:#ffffff;font-size:7.4px;font-weight:bold;-webkit-text-stroke:0.08px currentColor;transform:scaleX(0.88)">PLAY</div></div>
<div class="cl" style="left:376.5px;top:189.0px;width:23.3px;height:8px"><div class="c" style="left:0.5px;top:1.25px;color:#ffffff;font-size:7.4px;font-weight:bold;-webkit-text-stroke:0.08px currentColor;transform:scaleX(0.88)">A</div></div>
<div class="cl" style="left:401px;top:189.0px;width:116.8px;height:8px"><div class="c" style="left:0.5px;top:1.25px;color:#ffffff;font-size:7.4px;font-weight:bold;-webkit-text-stroke:0.08px currentColor;transform:scaleX(0.88)">ImagineComms_Aviator_PAL-i</div></div>
<div class="cl" style="left:543px;top:189.0px;width:142.3px;height:8px"><div class="c" style="left:0.5px;top:1.25px;color:#ffffff;font-size:7.4px;font-weight:bold;-webkit-text-stroke:0.08px currentColor;transform:scaleX(0.88)">ImagineComms_Aviator_PAL-i</div></div>
<div class="cl" style="left:686.5px;top:189.0px;width:55.00000000000004px;height:8px"><div class="c" style="left:0.5px;top:1.25px;color:#ffffff;font-size:7.4px;font-weight:bold;-webkit-text-stroke:0.08px currentColor;transform:scaleX(0.955)">00:01:24.14</div></div>
<div class="cl" style="left:742.7px;top:189.0px;width:14.599999999999955px;height:8px"><div class="c" style="left:0.5px;top:1.25px;color:#ffffff;font-size:7.4px;font-weight:bold;-webkit-text-stroke:0.08px currentColor;transform:scaleX(0.955)">00:00:00.00</div></div>
<div class="a" style="left:37px;top:198.0px;width:33px;height:8px;background:#5b5b5b"></div>
<div class="a" style="left:71px;top:198.0px;width:55px;height:8px;background:#6cbb52"></div>
<div class="a" style="left:127px;top:198.0px;width:55px;height:8px;background:#6cbb52"></div>
<div class="a" style="left:183px;top:198.0px;width:47px;height:8px;background:#6cbb52"></div>
<div class="a" style="left:231px;top:198.0px;width:36.5px;height:8px;background:#6cbb52"></div>
<div class="a" style="left:268.5px;top:198.0px;width:45.5px;height:8px;background:#6cbb52"></div>
<div class="a" style="left:315px;top:198.0px;width:38px;height:8px;background:#6cbb52"></div>
<div class="a" style="left:354px;top:198.0px;width:21.5px;height:8px;background:#6cbb52"></div>
<div class="a" style="left:376.5px;top:198.0px;width:23.5px;height:8px;background:#6cbb52"></div>
<div class="a" style="left:401px;top:198.0px;width:117px;height:8px;background:#6cbb52"></div>
<div class="a" style="left:519px;top:198.0px;width:23px;height:8px;background:#6cbb52"></div>
<div class="a" style="left:543px;top:198.0px;width:142.5px;height:8px;background:#00e6f2"></div>
<div class="a" style="left:686.5px;top:198.0px;width:55.200000000000045px;height:8px;background:#6cbb52"></div>
<div class="a" style="left:742.7px;top:198.0px;width:14.799999999999955px;height:8px;background:#6cbb52"></div>
<div class="cl" style="left:38px;top:198.0px;width:31.8px;height:8px"><div class="c" style="left:0.5px;top:1.25px;color:#ffffff;font-size:7.4px;font-weight:bold;-webkit-text-stroke:0.08px currentColor;transform:scaleX(0.955)">6</div></div>
<div class="cl" style="left:71px;top:198.0px;width:54.8px;height:8px"><div class="c" style="left:0.5px;top:1.25px;color:#ffffff;font-size:7.4px;font-weight:bold;-webkit-text-stroke:0.08px currentColor;transform:scaleX(0.955)">10/9/2024</div></div>
<div class="cl" style="left:127px;top:198.0px;width:54.8px;height:8px"><div class="c" style="left:0.5px;top:1.25px;color:#ffffff;font-size:7.4px;font-weight:bold;-webkit-text-stroke:0.08px currentColor;transform:scaleX(0.955)">00:00:00.00</div></div>
<div class="cl" style="left:183px;top:198.0px;width:46.8px;height:8px"><div class="c" style="left:0.5px;top:1.25px;color:#ffffff;font-size:7.4px;font-weight:bold;-webkit-text-stroke:0.08px currentColor;transform:scaleX(0.88)">ICONX:1</div></div>
<div class="cl" style="left:231px;top:198.0px;width:36.3px;height:8px"><div class="c" style="left:0.5px;top:1.25px;color:#ffffff;font-size:7.4px;font-weight:bold;-webkit-text-stroke:0.08px currentColor;transform:scaleX(0.88)">PLAY</div></div>
<div class="cl" style="left:354px;top:198.0px;width:21.3px;height:8px"><div class="c" style="left:0.5px;top:1.25px;color:#ffffff;font-size:7.4px;font-weight:bold;-webkit-text-stroke:0.08px currentColor;transform:scaleX(0.88)">sAV</div></div>
<div class="cl" style="left:376.5px;top:198.0px;width:23.3px;height:8px"><div class="c" style="left:0.5px;top:1.25px;color:#ffffff;font-size:7.4px;font-weight:bold;-webkit-text-stroke:0.08px currentColor;transform:scaleX(0.88)">PT</div></div>
<div class="cl" style="left:401px;top:198.0px;width:116.8px;height:8px"><div class="c" style="left:0.5px;top:1.25px;color:#ffffff;font-size:7.4px;font-weight:bold;-webkit-text-stroke:0.08px currentColor;transform:scaleX(0.88)">ICONX</div></div>
<div class="cl" style="left:543px;top:198.0px;width:142.3px;height:8px"><div class="c" style="left:0.5px;top:1.25px;color:#ffffff;font-size:7.4px;font-weight:bold;-webkit-text-stroke:0.08px currentColor;transform:scaleX(0.88)">ProgSalvo:VGFX_CTC_PAL,BUG,1</div></div>
<div class="cl" style="left:686.5px;top:198.0px;width:55.00000000000004px;height:8px"><div class="c" style="left:0.5px;top:1.25px;color:#ffffff;font-size:7.4px;font-weight:bold;-webkit-text-stroke:0.08px currentColor;transform:scaleX(0.955)">00:00:18.16</div></div>
<div class="a" style="left:37px;top:207.0px;width:33px;height:8px;background:#5b5b5b"></div>
<div class="a" style="left:71px;top:207.0px;width:55px;height:8px;background:#0b4d89"></div>
<div class="a" style="left:127px;top:207.0px;width:55px;height:8px;background:#0b4d89"></div>
<div class="a" style="left:183px;top:207.0px;width:47px;height:8px;background:#0b4d89"></div>
<div class="a" style="left:231px;top:207.0px;width:36.5px;height:8px;background:#0b4d89"></div>
<div class="a" style="left:268.5px;top:207.0px;width:45.5px;height:8px;background:#0b4d89"></div>
<div class="a" style="left:315px;top:207.0px;width:38px;height:8px;background:#0b4d89"></div>
<div class="a" style="left:354px;top:207.0px;width:21.5px;height:8px;background:#0b4d89"></div>
<div class="a" style="left:376.5px;top:207.0px;width:23.5px;height:8px;background:#0b4d89"></div>
<div class="a" style="left:401px;top:207.0px;width:117px;height:8px;background:#0b4d89"></div>
<div class="a" style="left:519px;top:207.0px;width:23px;height:8px;background:#0b4d89"></div>
<div class="a" style="left:543px;top:207.0px;width:142.5px;height:8px;background:#0b4d89"></div>
<div class="a" style="left:686.5px;top:207.0px;width:55.200000000000045px;height:8px;background:#0b4d89"></div>
<div class="a" style="left:742.7px;top:207.0px;width:14.799999999999955px;height:8px;background:#0b4d89"></div>
<div class="cl" style="left:38px;top:207.0px;width:31.8px;height:8px"><div class="c" style="left:0.5px;top:1.25px;color:#ffffff;font-size:7.4px;font-weight:bold;-webkit-text-stroke:0.08px currentColor;transform:scaleX(0.955)">7</div></div>
<div class="cl" style="left:71px;top:207.0px;width:54.8px;height:8px"><div class="c" style="left:0.5px;top:1.25px;color:#ffffff;font-size:7.4px;font-weight:bold;-webkit-text-stroke:0.08px currentColor;transform:scaleX(0.955)">10/9/2024</div></div>
<div class="cl" style="left:127px;top:207.0px;width:54.8px;height:8px"><div class="c" style="left:0.5px;top:1.25px;color:#ffffff;font-size:7.4px;font-weight:bold;-webkit-text-stroke:0.08px currentColor;transform:scaleX(0.955)">13:31:35.02</div></div>
<div class="cl" style="left:183px;top:207.0px;width:46.8px;height:8px"><div class="c" style="left:0.5px;top:1.25px;color:#ffffff;font-size:7.4px;font-weight:bold;-webkit-text-stroke:0.08px currentColor;transform:scaleX(0.88)">NX-CH5:10</div></div>
<div class="cl" style="left:231px;top:207.0px;width:36.3px;height:8px"><div class="c" style="left:0.5px;top:1.25px;color:#ffffff;font-size:7.4px;font-weight:bold;-webkit-text-stroke:0.08px currentColor;transform:scaleX(0.88)">CUED</div></div>
<div class="cl" style="left:376.5px;top:207.0px;width:23.3px;height:8px"><div class="c" style="left:0.5px;top:1.25px;color:#ffffff;font-size:7.4px;font-weight:bold;-webkit-text-stroke:0.08px currentColor;transform:scaleX(0.88)">AN</div></div>
<div class="cl" style="left:401px;top:207.0px;width:116.8px;height:8px"><div class="c" style="left:0.5px;top:1.25px;color:#ffffff;font-size:7.4px;font-weight:bold;-webkit-text-stroke:0.08px currentColor;transform:scaleX(0.88)">BALANCE-BEAM-30</div></div>
<div class="cl" style="left:543px;top:207.0px;width:142.3px;height:8px"><div class="c" style="left:0.5px;top:1.25px;color:#ffffff;font-size:7.4px;font-weight:bold;-webkit-text-stroke:0.08px currentColor;transform:scaleX(0.88)">BALANCE-BEAM-30</div></div>
<div class="cl" style="left:686.5px;top:207.0px;width:55.00000000000004px;height:8px"><div class="c" style="left:0.5px;top:1.25px;color:#ffffff;font-size:7.4px;font-weight:bold;-webkit-text-stroke:0.08px currentColor;transform:scaleX(0.955)">00:00:30.00</div></div>
<div class="cl" style="left:742.7px;top:207.0px;width:14.599999999999955px;height:8px"><div class="c" style="left:0.5px;top:1.25px;color:#ffffff;font-size:7.4px;font-weight:bold;-webkit-text-stroke:0.08px currentColor;transform:scaleX(0.955)">00:00:00.00</div></div>
<div class="a" style="left:37px;top:216.0px;width:33px;height:8px;background:#5b5b5b"></div>
<div class="a" style="left:71px;top:216.0px;width:55px;height:8px;background:#0b4d89"></div>
<div class="a" style="left:127px;top:216.0px;width:55px;height:8px;background:#0b4d89"></div>
<div class="a" style="left:183px;top:216.0px;width:47px;height:8px;background:#0b4d89"></div>
<div class="a" style="left:231px;top:216.0px;width:36.5px;height:8px;background:#0b4d89"></div>
<div class="a" style="left:268.5px;top:216.0px;width:45.5px;height:8px;background:#0b4d89"></div>
<div class="a" style="left:315px;top:216.0px;width:38px;height:8px;background:#0b4d89"></div>
<div class="a" style="left:354px;top:216.0px;width:21.5px;height:8px;background:#0b4d89"></div>
<div class="a" style="left:376.5px;top:216.0px;width:23.5px;height:8px;background:#0b4d89"></div>
<div class="a" style="left:401px;top:216.0px;width:117px;height:8px;background:#0b4d89"></div>
<div class="a" style="left:519px;top:216.0px;width:23px;height:8px;background:#0b4d89"></div>
<div class="a" style="left:543px;top:216.0px;width:142.5px;height:8px;background:#0b4d89"></div>
<div class="a" style="left:686.5px;top:216.0px;width:55.200000000000045px;height:8px;background:#0b4d89"></div>
<div class="a" style="left:742.7px;top:216.0px;width:14.799999999999955px;height:8px;background:#0b4d89"></div>
<div class="cl" style="left:38px;top:216.0px;width:31.8px;height:8px"><div class="c" style="left:0.5px;top:1.25px;color:#ffffff;font-size:7.4px;font-weight:bold;-webkit-text-stroke:0.08px currentColor;transform:scaleX(0.955)">8</div></div>
<div class="cl" style="left:71px;top:216.0px;width:54.8px;height:8px"><div class="c" style="left:0.5px;top:1.25px;color:#ffffff;font-size:7.4px;font-weight:bold;-webkit-text-stroke:0.08px currentColor;transform:scaleX(0.955)">10/9/2024</div></div>
<div class="cl" style="left:127px;top:216.0px;width:54.8px;height:8px"><div class="c" style="left:0.5px;top:1.25px;color:#ffffff;font-size:7.4px;font-weight:bold;-webkit-text-stroke:0.08px currentColor;transform:scaleX(0.955)">13:32:05.02</div></div>
<div class="cl" style="left:183px;top:216.0px;width:46.8px;height:8px"><div class="c" style="left:0.5px;top:1.25px;color:#ffffff;font-size:7.4px;font-weight:bold;-webkit-text-stroke:0.08px currentColor;transform:scaleX(0.88)">NexioA</div></div>
<div class="cl" style="left:376.5px;top:216.0px;width:23.3px;height:8px"><div class="c" style="left:0.5px;top:1.25px;color:#ffffff;font-size:7.4px;font-weight:bold;-webkit-text-stroke:0.08px currentColor;transform:scaleX(0.88)">A</div></div>
<div class="cl" style="left:401px;top:216.0px;width:116.8px;height:8px"><div class="c" style="left:0.5px;top:1.25px;color:#ffffff;font-size:7.4px;font-weight:bold;-webkit-text-stroke:0.08px currentColor;transform:scaleX(0.88)">BACK2SCHOOL-20</div></div>
<div class="cl" style="left:543px;top:216.0px;width:142.3px;height:8px"><div class="c" style="left:0.5px;top:1.25px;color:#ffffff;font-size:7.4px;font-weight:bold;-webkit-text-stroke:0.08px currentColor;transform:scaleX(0.88)">BACK2SCHOOL-20</div></div>
<div class="cl" style="left:686.5px;top:216.0px;width:55.00000000000004px;height:8px"><div class="c" style="left:0.5px;top:1.25px;color:#ffffff;font-size:7.4px;font-weight:bold;-webkit-text-stroke:0.08px currentColor;transform:scaleX(0.955)">00:00:20.00</div></div>
<div class="cl" style="left:742.7px;top:216.0px;width:14.599999999999955px;height:8px"><div class="c" style="left:0.5px;top:1.25px;color:#ffffff;font-size:7.4px;font-weight:bold;-webkit-text-stroke:0.08px currentColor;transform:scaleX(0.955)">00:00:00.00</div></div>
<div class="a" style="left:37px;top:225.0px;width:33px;height:8px;background:#5b5b5b"></div>
<div class="a" style="left:71px;top:225.0px;width:55px;height:8px;background:#8c1c1e"></div>
<div class="a" style="left:127px;top:225.0px;width:55px;height:8px;background:#8c1c1e"></div>
<div class="a" style="left:183px;top:225.0px;width:47px;height:8px;background:#8c1c1e"></div>
<div class="a" style="left:231px;top:225.0px;width:36.5px;height:8px;background:#8c1c1e"></div>
<div class="a" style="left:268.5px;top:225.0px;width:45.5px;height:8px;background:#8c1c1e"></div>
<div class="a" style="left:315px;top:225.0px;width:38px;height:8px;background:#8c1c1e"></div>
<div class="a" style="left:354px;top:225.0px;width:21.5px;height:8px;background:#8c1c1e"></div>
<div class="a" style="left:376.5px;top:225.0px;width:23.5px;height:8px;background:#8c1c1e"></div>
<div class="a" style="left:401px;top:225.0px;width:117px;height:8px;background:#8c1c1e"></div>
<div class="a" style="left:519px;top:225.0px;width:23px;height:8px;background:#8c1c1e"></div>
<div class="a" style="left:543px;top:225.0px;width:142.5px;height:8px;background:#8c1c1e"></div>
<div class="a" style="left:686.5px;top:225.0px;width:55.200000000000045px;height:8px;background:#8c1c1e"></div>
<div class="a" style="left:742.7px;top:225.0px;width:14.799999999999955px;height:8px;background:#8c1c1e"></div>
<div class="cl" style="left:38px;top:225.0px;width:31.8px;height:8px"><div class="c" style="left:0.5px;top:1.25px;color:#ffffff;font-size:7.4px;font-weight:bold;-webkit-text-stroke:0.08px currentColor;transform:scaleX(0.955)">9</div></div>
<div class="cl" style="left:71px;top:225.0px;width:54.8px;height:8px"><div class="c" style="left:0.5px;top:1.25px;color:#ffffff;font-size:7.4px;font-weight:bold;-webkit-text-stroke:0.08px currentColor;transform:scaleX(0.955)">10/9/2024</div></div>
<div class="cl" style="left:127px;top:225.0px;width:54.8px;height:8px"><div class="c" style="left:0.5px;top:1.25px;color:#ffffff;font-size:7.4px;font-weight:bold;-webkit-text-stroke:0.08px currentColor;transform:scaleX(0.955)">13:32:25.02</div></div>
<div class="cl" style="left:376.5px;top:225.0px;width:23.3px;height:8px"><div class="c" style="left:0.5px;top:1.25px;color:#ffffff;font-size:7.4px;font-weight:bold;-webkit-text-stroke:0.08px currentColor;transform:scaleX(0.88)">A</div></div>
<div class="cl" style="left:401px;top:225.0px;width:116.8px;height:8px"><div class="c" style="left:0.5px;top:1.25px;color:#ffffff;font-size:7.4px;font-weight:bold;-webkit-text-stroke:0.08px currentColor;transform:scaleX(0.88)">MEDIA</div></div>
<div class="cl" style="left:543px;top:225.0px;width:142.3px;height:8px"><div class="c" style="left:0.5px;top:1.25px;color:#ffffff;font-size:7.4px;font-weight:bold;-webkit-text-stroke:0.08px currentColor;transform:scaleX(0.88)">FOOD-BLOG-10</div></div>
<div class="cl" style="left:686.5px;top:225.0px;width:55.00000000000004px;height:8px"><div class="c" style="left:0.5px;top:1.25px;color:#ffffff;font-size:7.4px;font-weight:bold;-webkit-text-stroke:0.08px currentColor;transform:scaleX(0.955)">00:00:10.00</div></div>
<div class="cl" style="left:742.7px;top:225.0px;width:14.599999999999955px;height:8px"><div class="c" style="left:0.5px;top:1.25px;color:#ffffff;font-size:7.4px;font-weight:bold;-webkit-text-stroke:0.08px currentColor;transform:scaleX(0.955)">00:00:00.00</div></div>
<div class="a" style="left:37px;top:234.0px;width:33px;height:8px;background:#5b5b5b"></div>
<div class="a" style="left:71px;top:234.0px;width:55px;height:8px;background:#0b4d89"></div>
<div class="a" style="left:127px;top:234.0px;width:55px;height:8px;background:#0b4d89"></div>
<div class="a" style="left:183px;top:234.0px;width:47px;height:8px;background:#0b4d89"></div>
<div class="a" style="left:231px;top:234.0px;width:36.5px;height:8px;background:#0b4d89"></div>
<div class="a" style="left:268.5px;top:234.0px;width:45.5px;height:8px;background:#0b4d89"></div>
<div class="a" style="left:315px;top:234.0px;width:38px;height:8px;background:#0b4d89"></div>
<div class="a" style="left:354px;top:234.0px;width:21.5px;height:8px;background:#0b4d89"></div>
<div class="a" style="left:376.5px;top:234.0px;width:23.5px;height:8px;background:#0b4d89"></div>
<div class="a" style="left:401px;top:234.0px;width:117px;height:8px;background:#0b4d89"></div>
<div class="a" style="left:519px;top:234.0px;width:23px;height:8px;background:#0b4d89"></div>
<div class="a" style="left:543px;top:234.0px;width:142.5px;height:8px;background:#0b4d89"></div>
<div class="a" style="left:686.5px;top:234.0px;width:55.200000000000045px;height:8px;background:#0b4d89"></div>
<div class="a" style="left:742.7px;top:234.0px;width:14.799999999999955px;height:8px;background:#0b4d89"></div>
<div class="cl" style="left:38px;top:234.0px;width:31.8px;height:8px"><div class="c" style="left:0.5px;top:1.25px;color:#ffffff;font-size:7.4px;font-weight:bold;-webkit-text-stroke:0.08px currentColor;transform:scaleX(0.955)">10</div></div>
<div class="cl" style="left:71px;top:234.0px;width:54.8px;height:8px"><div class="c" style="left:0.5px;top:1.25px;color:#ffffff;font-size:7.4px;font-weight:bold;-webkit-text-stroke:0.08px currentColor;transform:scaleX(0.955)">10/9/2024</div></div>
<div class="cl" style="left:127px;top:234.0px;width:54.8px;height:8px"><div class="c" style="left:0.5px;top:1.25px;color:#ffffff;font-size:7.4px;font-weight:bold;-webkit-text-stroke:0.08px currentColor;transform:scaleX(0.955)">13:32:35.02</div></div>
<div class="cl" style="left:183px;top:234.0px;width:46.8px;height:8px"><div class="c" style="left:0.5px;top:1.25px;color:#ffffff;font-size:7.4px;font-weight:bold;-webkit-text-stroke:0.08px currentColor;transform:scaleX(0.88)">NexioA</div></div>
<div class="cl" style="left:376.5px;top:234.0px;width:23.3px;height:8px"><div class="c" style="left:0.5px;top:1.25px;color:#ffffff;font-size:7.4px;font-weight:bold;-webkit-text-stroke:0.08px currentColor;transform:scaleX(0.88)">A</div></div>
<div class="cl" style="left:401px;top:234.0px;width:116.8px;height:8px"><div class="c" style="left:0.5px;top:1.25px;color:#ffffff;font-size:7.4px;font-weight:bold;-webkit-text-stroke:0.08px currentColor;transform:scaleX(0.88)">IC-ENERGY-15</div></div>
<div class="cl" style="left:543px;top:234.0px;width:142.3px;height:8px"><div class="c" style="left:0.5px;top:1.25px;color:#ffffff;font-size:7.4px;font-weight:bold;-webkit-text-stroke:0.08px currentColor;transform:scaleX(0.88)">IC-ENERGY-15</div></div>
<div class="cl" style="left:686.5px;top:234.0px;width:55.00000000000004px;height:8px"><div class="c" style="left:0.5px;top:1.25px;color:#ffffff;font-size:7.4px;font-weight:bold;-webkit-text-stroke:0.08px currentColor;transform:scaleX(0.955)">00:00:15.00</div></div>
<div class="cl" style="left:742.7px;top:234.0px;width:14.599999999999955px;height:8px"><div class="c" style="left:0.5px;top:1.25px;color:#ffffff;font-size:7.4px;font-weight:bold;-webkit-text-stroke:0.08px currentColor;transform:scaleX(0.955)">00:00:00.00</div></div>
<div class="a" style="left:36px;top:144.5px;width:1px;height:99px;background:#4a4a4a"></div>
<div class="a" style="left:757.5px;top:144.5px;width:8.5px;height:99px;background:#505350"></div>
<svg class="a" style="left:758px;top:146.5px" width="8" height="6" viewBox="0 0 8 6"><path d="M1.5 4.5 L4 2 L6.5 4.5 Z" fill="#ddd"/></svg>
<div class="a" style="left:759.8px;top:153.5px;width:4.3px;height:10px;background:#7a7a7a"></div>
<svg class="a" style="left:758px;top:237px" width="8" height="6" viewBox="0 0 8 6"><path d="M1.5 1.5 L4 4 L6.5 1.5 Z" fill="#ddd"/></svg>
<div class="a" style="left:36px;top:243.3px;width:730px;height:10.2px;background:#4b4f4c"></div>
<svg class="a" style="left:38.5px;top:245px" width="6" height="8" viewBox="0 0 6 8"><path d="M4.5 1.5 L2 4 L4.5 6.5 Z" fill="#ddd"/></svg>
<div class="a" style="left:45.8px;top:246.6px;width:10.2px;height:5.2px;background:#7b7f7b"></div>
<svg class="a" style="left:759.5px;top:245px" width="6" height="8" viewBox="0 0 6 8"><path d="M1.5 1.5 L4 4 L1.5 6.5 Z" fill="#ddd"/></svg>
<div class="a" style="left:36px;top:253.5px;width:730px;height:10.5px;background:#3c3c3c"></div>
<div class="a" style="left:37px;top:254.3px;width:41.900000000000006px;height:9.4px;background:#585858"></div>
<div class="t" style="left:38.5px;top:255.6px;color:#fff;font-size:7.3px;font-weight:bold;transform:scaleX(0.88);transform-origin:0 0">13:30:10.09</div>
<div class="a" style="left:79.9px;top:254.3px;width:22.599999999999994px;height:9.4px;background:#585858"></div>
<div class="a" style="left:103.5px;top:254.3px;width:17.799999999999997px;height:9.4px;background:#585858"></div>
<div class="t" style="left:105.0px;top:255.6px;color:#fff;font-size:7.3px;font-weight:bold;transform:scaleX(0.84);transform-origin:0 0">C</div>
<div class="a" style="left:122.3px;top:254.3px;width:27.200000000000003px;height:9.4px;background:#585858"></div>
<div class="a" style="left:150.5px;top:254.3px;width:26.0px;height:9.4px;background:#585858"></div>
<div class="t" style="left:152.0px;top:255.6px;color:#fff;font-size:7.3px;font-weight:bold;transform:scaleX(0.88);transform-origin:0 0">76</div>
<div class="a" style="left:177.5px;top:254.3px;width:25.5px;height:9.4px;background:#585858"></div>
<div class="t" style="left:179.0px;top:255.6px;color:#fff;font-size:7.3px;font-weight:bold;transform:scaleX(0.88);transform-origin:0 0">50</div>
<div class="a" style="left:204px;top:254.3px;width:43px;height:9.4px;background:#585858"></div>
<div class="t" style="left:205.5px;top:255.6px;color:#fff;font-size:7.3px;font-weight:bold;transform:scaleX(0.88);transform-origin:0 0">00:01:24.15</div>
<div class="a" style="left:248px;top:254.3px;width:47.5px;height:9.4px;background:#585858"></div>
<div class="a" style="left:296.5px;top:254.3px;width:54.0px;height:9.4px;background:#585858"></div>
<div class="t" style="left:298.0px;top:255.6px;color:#fff;font-size:7.3px;font-weight:bold;transform:scaleX(0.84);transform-origin:0 0">Air Focus: ON</div>
<div class="a" style="left:351.5px;top:254.3px;width:402.5px;height:9.4px;background:#585858"></div>
<div class="a" style="left:755px;top:254.3px;width:10px;height:9.4px;background:#585858"></div>
<div class="t" style="left:445px;top:255.6px;color:#fff;font-size:7.3px;font-weight:bold;transform:scaleX(0.84);transform-origin:0 0">EDIT.CUR</div>
<div class="a" style="left:36px;top:264px;width:730px;height:2px;background:#25282c"></div>
<div class="a" style="left:36px;top:266px;width:730px;height:17.8px;background:#363a40"></div>
<svg class="a" style="left:38.5px;top:270.5px" width="8" height="9" viewBox="0 0 8 9"><path d="M0.5 0.5 H5 L7.5 3 V8.5 H0.5 Z" fill="#f5f5f5"/></svg>
<div class="t" style="left:49px;top:272px;color:#e8e3d4;font-size:7.8px;-webkit-text-stroke:0.1px #e8e3d4;transform:scaleX(0.9);transform-origin:0 0">PlayList - C:\Users\imagine\Desktop\Playlists\PlayoutGFX.lst</div>
<div class="a" style="left:714.4px;top:275.6px;width:6px;height:2px;background:#eee"></div>
<div class="a" style="left:733.5px;top:272px;width:6.5px;height:6.5px;border:1.2px solid #eee;box-sizing:border-box"></div>
<svg class="a" style="left:753px;top:271.5px" width="8" height="8" viewBox="0 0 8 8"><path d="M1.2 1.2 L6.8 6.8 M6.8 1.2 L1.2 6.8" stroke="#eee" stroke-width="1.3"/></svg>
<div class="a" style="left:37px;top:284.2px;width:721px;height:102.80000000000001px;background:#222222"></div>
<div class="a" style="left:37px;top:284.2px;width:33.2px;height:8.5px;background:linear-gradient(#606060,#565656)"></div>
<div class="c" style="left:39.5px;top:286.0px;color:#fff;font-size:7.4px;font-weight:bold;-webkit-text-stroke:0.08px currentColor;transform:scaleX(0.88)">Event</div>
<div class="a" style="left:71.2px;top:284.2px;width:55.5px;height:8.5px;background:linear-gradient(#606060,#565656)"></div>
<div class="c" style="left:72.7px;top:286.0px;color:#fff;font-size:7.4px;font-weight:bold;-webkit-text-stroke:0.08px currentColor;transform:scaleX(0.88)">Time</div>
<div class="a" style="left:127.7px;top:284.2px;width:46.3px;height:8.5px;background:linear-gradient(#606060,#565656)"></div>
<div class="c" style="left:129.2px;top:286.0px;color:#fff;font-size:7.4px;font-weight:bold;-webkit-text-stroke:0.08px currentColor;transform:scaleX(0.88)">Device</div>
<div class="a" style="left:175px;top:284.2px;width:36.69999999999999px;height:8.5px;background:linear-gradient(#606060,#565656)"></div>
<div class="c" style="left:176.5px;top:286.0px;color:#fff;font-size:7.4px;font-weight:bold;-webkit-text-stroke:0.08px currentColor;transform:scaleX(0.88)">Status</div>
<div class="a" style="left:212.7px;top:284.2px;width:36.0px;height:8.5px;background:linear-gradient(#606060,#565656)"></div>
<div class="c" style="left:214.2px;top:286.0px;color:#fff;font-size:7.4px;font-weight:bold;-webkit-text-stroke:0.08px currentColor;transform:scaleX(0.88)">PStatus</div>
<div class="a" style="left:249.7px;top:284.2px;width:45.80000000000001px;height:8.5px;background:linear-gradient(#606060,#565656)"></div>
<div class="c" style="left:251.2px;top:286.0px;color:#fff;font-size:7.4px;font-weight:bold;-webkit-text-stroke:0.08px currentColor;transform:scaleX(0.88)">Protect</div>
<div class="a" style="left:296.5px;top:284.2px;width:23.0px;height:8.5px;background:linear-gradient(#606060,#565656)"></div>
<div class="c" style="left:298.0px;top:286.0px;color:#fff;font-size:7.4px;font-weight:bold;-webkit-text-stroke:0.08px currentColor;transform:scaleX(0.88)">Sec</div>
<div class="a" style="left:320.5px;top:284.2px;width:23.69999999999999px;height:8.5px;background:linear-gradient(#606060,#565656)"></div>
<div class="c" style="left:322.0px;top:286.0px;color:#fff;font-size:7.4px;font-weight:bold;-webkit-text-stroke:0.08px currentColor;transform:scaleX(0.88)">Type</div>
<div class="a" style="left:345.2px;top:284.2px;width:44.5px;height:8.5px;background:linear-gradient(#606060,#565656)"></div>
<div class="c" style="left:346.7px;top:286.0px;color:#fff;font-size:7.4px;font-weight:bold;-webkit-text-stroke:0.08px currentColor;transform:scaleX(0.88)">ID</div>
<div class="a" style="left:390.7px;top:284.2px;width:23.0px;height:8.5px;background:linear-gradient(#606060,#565656)"></div>
<div class="c" style="left:392.2px;top:286.0px;color:#fff;font-size:7.4px;font-weight:bold;-webkit-text-stroke:0.08px currentColor;transform:scaleX(0.88)">Seg</div>
<div class="a" style="left:414.7px;top:284.2px;width:91.60000000000002px;height:8.5px;background:linear-gradient(#606060,#565656)"></div>
<div class="c" style="left:416.2px;top:286.0px;color:#fff;font-size:7.4px;font-weight:bold;-webkit-text-stroke:0.08px currentColor;transform:scaleX(0.88)">Title</div>
<div class="a" style="left:507.3px;top:284.2px;width:55.400000000000034px;height:8.5px;background:linear-gradient(#606060,#565656)"></div>
<div class="c" style="left:508.8px;top:286.0px;color:#fff;font-size:7.4px;font-weight:bold;-webkit-text-stroke:0.08px currentColor;transform:scaleX(0.88)">Dur</div>
<div class="a" style="left:563.7px;top:284.2px;width:55.799999999999955px;height:8.5px;background:linear-gradient(#606060,#565656)"></div>
<div class="c" style="left:565.2px;top:286.0px;color:#fff;font-size:7.4px;font-weight:bold;-webkit-text-stroke:0.08px currentColor;transform:scaleX(0.88)">SOM</div>
<div class="a" style="left:620.5px;top:284.2px;width:21.5px;height:8.5px;background:linear-gradient(#606060,#565656)"></div>
<div class="c" style="left:622.0px;top:286.0px;color:#fff;font-size:7.4px;font-weight:bold;-webkit-text-stroke:0.08px currentColor;transform:scaleX(0.88)">Bin</div>
<div class="a" style="left:643px;top:284.2px;width:18.5px;height:8.5px;background:linear-gradient(#606060,#565656)"></div>
<div class="c" style="left:644.5px;top:286.0px;color:#fff;font-size:7.4px;font-weight:bold;-webkit-text-stroke:0.08px currentColor;transform:scaleX(0.88)">Ch</div>
<div class="a" style="left:662.5px;top:284.2px;width:8.700000000000045px;height:8.5px;background:linear-gradient(#606060,#565656)"></div>
<div class="c" style="left:664.0px;top:286.0px;color:#fff;font-size:7.4px;font-weight:bold;-webkit-text-stroke:0.08px currentColor;transform:scaleX(0.88)">E</div>
<div class="a" style="left:672.2px;top:284.2px;width:9.5px;height:8.5px;background:linear-gradient(#606060,#565656)"></div>
<div class="c" style="left:673.7px;top:286.0px;color:#fff;font-size:7.4px;font-weight:bold;-webkit-text-stroke:0.08px currentColor;transform:scaleX(0.88)">S</div>
<div class="a" style="left:682.7px;top:284.2px;width:31.699999999999932px;height:8.5px;background:linear-gradient(#606060,#565656)"></div>
<div class="c" style="left:684.2px;top:286.0px;color:#fff;font-size:7.4px;font-weight:bold;-webkit-text-stroke:0.08px currentColor;transform:scaleX(0.88)">QUAL</div>
<div class="a" style="left:715.4px;top:284.2px;width:15.850000000000023px;height:8.5px;background:linear-gradient(#606060,#565656)"></div>
<div class="c" style="left:716.9px;top:286.0px;color:#fff;font-size:7.4px;font-weight:bold;-webkit-text-stroke:0.08px currentColor;transform:scaleX(0.88)">#</div>
<div class="a" style="left:732.25px;top:284.2px;width:15.75px;height:8.5px;background:linear-gradient(#606060,#565656)"></div>
<div class="c" style="left:733.75px;top:286.0px;color:#fff;font-size:7.4px;font-weight:bold;-webkit-text-stroke:0.08px currentColor;transform:scaleX(0.88)">%</div>
<div class="a" style="left:749px;top:284.2px;width:9px;height:8.5px;background:linear-gradient(#606060,#565656)"></div>
<div class="c" style="left:750.5px;top:286.0px;color:#fff;font-size:7.4px;font-weight:bold;-webkit-text-stroke:0.08px currentColor;transform:scaleX(0.88)">Cr</div>
<div class="a" style="left:37px;top:292.7px;width:33.2px;height:8px;background:#5b5b5b"></div>
<div class="a" style="left:71.2px;top:292.7px;width:55.5px;height:8px;background:#00e6f2"></div>
<div class="a" style="left:127.7px;top:292.7px;width:46.3px;height:8px;background:#0b4d89"></div>
<div class="a" style="left:175px;top:292.7px;width:36.69999999999999px;height:8px;background:#0b4d89"></div>
<div class="a" style="left:212.7px;top:292.7px;width:36.0px;height:8px;background:#0b4d89"></div>
<div class="a" style="left:249.7px;top:292.7px;width:45.80000000000001px;height:8px;background:#0b4d89"></div>
<div class="a" style="left:296.5px;top:292.7px;width:23.0px;height:8px;background:#0b4d89"></div>
<div class="a" style="left:320.5px;top:292.7px;width:23.69999999999999px;height:8px;background:#0b4d89"></div>
<div class="a" style="left:345.2px;top:292.7px;width:44.5px;height:8px;background:#0b4d89"></div>
<div class="a" style="left:390.7px;top:292.7px;width:23.0px;height:8px;background:#0b4d89"></div>
<div class="a" style="left:414.7px;top:292.7px;width:91.60000000000002px;height:8px;background:#0b4d89"></div>
<div class="a" style="left:507.3px;top:292.7px;width:55.400000000000034px;height:8px;background:#0b4d89"></div>
<div class="a" style="left:563.7px;top:292.7px;width:55.799999999999955px;height:8px;background:#0b4d89"></div>
<div class="a" style="left:620.5px;top:292.7px;width:21.5px;height:8px;background:#0b4d89"></div>
<div class="a" style="left:643px;top:292.7px;width:18.5px;height:8px;background:#0b4d89"></div>
<div class="a" style="left:662.5px;top:292.7px;width:8.700000000000045px;height:8px;background:#0b4d89"></div>
<div class="a" style="left:672.2px;top:292.7px;width:9.5px;height:8px;background:#0b4d89"></div>
<div class="a" style="left:682.7px;top:292.7px;width:31.699999999999932px;height:8px;background:#0b4d89"></div>
<div class="a" style="left:715.4px;top:292.7px;width:15.850000000000023px;height:8px;background:#0b4d89"></div>
<div class="a" style="left:732.25px;top:292.7px;width:15.75px;height:8px;background:#0b4d89"></div>
<div class="a" style="left:749px;top:292.7px;width:9px;height:8px;background:#0b4d89"></div>
<div class="cl" style="left:38px;top:292.7px;width:32.0px;height:8px"><div class="c" style="left:0.5px;top:1.25px;color:#ffffff;font-size:7.4px;font-weight:bold;-webkit-text-stroke:0.08px currentColor;transform:scaleX(0.955)">1</div></div>
<div class="cl" style="left:71.2px;top:292.7px;width:55.3px;height:8px"><div class="c" style="left:0.5px;top:1.25px;color:#ffffff;font-size:7.4px;font-weight:bold;-webkit-text-stroke:0.08px currentColor;transform:scaleX(0.955)">00:00:00.00</div></div>
<div class="cl" style="left:320.5px;top:292.7px;width:23.49999999999999px;height:8px"><div class="c" style="left:0.5px;top:1.25px;color:#ffffff;font-size:7.4px;font-weight:bold;-webkit-text-stroke:0.08px currentColor;transform:scaleX(0.88)">A</div></div>
<div class="cl" style="left:345.2px;top:292.7px;width:44.3px;height:8px"><div class="c" style="left:0.5px;top:1.25px;color:#ffffff;font-size:7.4px;font-weight:bold;-webkit-text-stroke:0.08px currentColor;transform:scaleX(0.88)">ImagineComm</div></div>
<div class="cl" style="left:414.7px;top:292.7px;width:91.40000000000002px;height:8px"><div class="c" style="left:0.5px;top:1.25px;color:#ffffff;font-size:7.4px;font-weight:bold;-webkit-text-stroke:0.08px currentColor;transform:scaleX(0.88)">ImagineComms_Aviator_PAL</div></div>
<div class="cl" style="left:507.3px;top:292.7px;width:55.20000000000003px;height:8px"><div class="c" style="left:0.5px;top:1.25px;color:#ffffff;font-size:7.4px;font-weight:bold;-webkit-text-stroke:0.08px currentColor;transform:scaleX(0.955)">00:01:35.23</div></div>
<div class="cl" style="left:563.7px;top:292.7px;width:55.59999999999995px;height:8px"><div class="c" style="left:0.5px;top:1.25px;color:#ffffff;font-size:7.4px;font-weight:bold;-webkit-text-stroke:0.08px currentColor;transform:scaleX(0.955)">00:00:00.00</div></div>
<div class="cl" style="left:662.5px;top:292.7px;width:8.500000000000046px;height:8px"><div class="c" style="left:0.5px;top:1.25px;color:#dcc6a2;font-size:7.4px;font-weight:bold;-webkit-text-stroke:0.08px currentColor;transform:scaleX(0.88)">Y</div></div>
<div class="cl" style="left:672.2px;top:292.7px;width:9.3px;height:8px"><div class="c" style="left:0.5px;top:1.25px;color:#ffffff;font-size:7.4px;font-weight:bold;-webkit-text-stroke:0.08px currentColor;transform:scaleX(0.88)">S</div></div>
<div class="cl" style="left:715.4px;top:292.7px;width:15.650000000000023px;height:8px"><div class="c" style="left:0.5px;top:1.25px;color:#ffffff;font-size:7.4px;font-weight:bold;-webkit-text-stroke:0.08px currentColor;transform:scaleX(0.955)">0</div></div>
<div class="a" style="left:37px;top:301.7px;width:33.2px;height:8px;background:#5b5b5b"></div>
<div class="a" style="left:71.2px;top:301.7px;width:55.5px;height:8px;background:#8e52b2"></div>
<div class="a" style="left:127.7px;top:301.7px;width:46.3px;height:8px;background:#8e52b2"></div>
<div class="a" style="left:175px;top:301.7px;width:36.69999999999999px;height:8px;background:#8e52b2"></div>
<div class="a" style="left:212.7px;top:301.7px;width:36.0px;height:8px;background:#8e52b2"></div>
<div class="a" style="left:249.7px;top:301.7px;width:45.80000000000001px;height:8px;background:#8e52b2"></div>
<div class="a" style="left:296.5px;top:301.7px;width:23.0px;height:8px;background:#8e52b2"></div>
<div class="a" style="left:320.5px;top:301.7px;width:23.69999999999999px;height:8px;background:#8e52b2"></div>
<div class="a" style="left:345.2px;top:301.7px;width:44.5px;height:8px;background:#8e52b2"></div>
<div class="a" style="left:390.7px;top:301.7px;width:23.0px;height:8px;background:#8e52b2"></div>
<div class="a" style="left:414.7px;top:301.7px;width:91.60000000000002px;height:8px;background:#8e52b2"></div>
<div class="a" style="left:507.3px;top:301.7px;width:55.400000000000034px;height:8px;background:#8e52b2"></div>
<div class="a" style="left:563.7px;top:301.7px;width:55.799999999999955px;height:8px;background:#8e52b2"></div>
<div class="a" style="left:620.5px;top:301.7px;width:21.5px;height:8px;background:#8e52b2"></div>
<div class="a" style="left:643px;top:301.7px;width:18.5px;height:8px;background:#8e52b2"></div>
<div class="a" style="left:662.5px;top:301.7px;width:8.700000000000045px;height:8px;background:#8e52b2"></div>
<div class="a" style="left:672.2px;top:301.7px;width:9.5px;height:8px;background:#8e52b2"></div>
<div class="a" style="left:682.7px;top:301.7px;width:31.699999999999932px;height:8px;background:#8e52b2"></div>
<div class="a" style="left:715.4px;top:301.7px;width:15.850000000000023px;height:8px;background:#8e52b2"></div>
<div class="a" style="left:732.25px;top:301.7px;width:15.75px;height:8px;background:#8e52b2"></div>
<div class="a" style="left:749px;top:301.7px;width:9px;height:8px;background:#8e52b2"></div>
<div class="cl" style="left:38px;top:301.7px;width:32.0px;height:8px"><div class="c" style="left:0.5px;top:1.25px;color:#ffffff;font-size:7.4px;font-weight:bold;-webkit-text-stroke:0.08px currentColor;transform:scaleX(0.955)">2</div></div>
<div class="cl" style="left:71.2px;top:301.7px;width:55.3px;height:8px"><div class="c" style="left:0.5px;top:1.25px;color:#ffffff;font-size:7.4px;font-weight:bold;-webkit-text-stroke:0.08px currentColor;transform:scaleX(0.955)">00:00:00.00</div></div>
<div class="cl" style="left:296.5px;top:301.7px;width:22.8px;height:8px"><div class="c" style="left:0.5px;top:1.25px;color:#ffffff;font-size:7.4px;font-weight:bold;-webkit-text-stroke:0.08px currentColor;transform:scaleX(0.88)">sAV</div></div>
<div class="cl" style="left:320.5px;top:301.7px;width:23.49999999999999px;height:8px"><div class="c" style="left:0.5px;top:1.25px;color:#ffffff;font-size:7.4px;font-weight:bold;-webkit-text-stroke:0.08px currentColor;transform:scaleX(0.88)">PT</div></div>
<div class="cl" style="left:345.2px;top:301.7px;width:44.3px;height:8px"><div class="c" style="left:0.5px;top:1.25px;color:#ffffff;font-size:7.4px;font-weight:bold;-webkit-text-stroke:0.08px currentColor;transform:scaleX(0.88)">ICONX</div></div>
<div class="cl" style="left:414.7px;top:301.7px;width:91.40000000000002px;height:8px"><div class="c" style="left:0.5px;top:1.25px;color:#ffffff;font-size:7.4px;font-weight:bold;-webkit-text-stroke:0.08px currentColor;transform:scaleX(0.88)">ProgSalvo:VGFX_CTC_PAL,I</div></div>
<div class="cl" style="left:507.3px;top:301.7px;width:55.20000000000003px;height:8px"><div class="c" style="left:0.5px;top:1.25px;color:#ffffff;font-size:7.4px;font-weight:bold;-webkit-text-stroke:0.08px currentColor;transform:scaleX(0.955)">00:00:30.00</div></div>
<div class="cl" style="left:662.5px;top:301.7px;width:8.500000000000046px;height:8px"><div class="c" style="left:0.5px;top:1.25px;color:#dcc6a2;font-size:7.4px;font-weight:bold;-webkit-text-stroke:0.08px currentColor;transform:scaleX(0.88)">Y</div></div>
<div class="cl" style="left:672.2px;top:301.7px;width:9.3px;height:8px"><div class="c" style="left:0.5px;top:1.25px;color:#ffffff;font-size:7.4px;font-weight:bold;-webkit-text-stroke:0.08px currentColor;transform:scaleX(0.88)">S</div></div>
<div class="cl" style="left:715.4px;top:301.7px;width:15.650000000000023px;height:8px"><div class="c" style="left:0.5px;top:1.25px;color:#ffffff;font-size:7.4px;font-weight:bold;-webkit-text-stroke:0.08px currentColor;transform:scaleX(0.955)">0</div></div>
<div class="a" style="left:37px;top:310.7px;width:33.2px;height:8px;background:#5b5b5b"></div>
<div class="a" style="left:71.2px;top:310.7px;width:55.5px;height:8px;background:#0b4d89"></div>
<div class="a" style="left:127.7px;top:310.7px;width:46.3px;height:8px;background:#0b4d89"></div>
<div class="a" style="left:175px;top:310.7px;width:36.69999999999999px;height:8px;background:#0b4d89"></div>
<div class="a" style="left:212.7px;top:310.7px;width:36.0px;height:8px;background:#0b4d89"></div>
<div class="a" style="left:249.7px;top:310.7px;width:45.80000000000001px;height:8px;background:#0b4d89"></div>
<div class="a" style="left:296.5px;top:310.7px;width:23.0px;height:8px;background:#0b4d89"></div>
<div class="a" style="left:320.5px;top:310.7px;width:23.69999999999999px;height:8px;background:#0b4d89"></div>
<div class="a" style="left:345.2px;top:310.7px;width:44.5px;height:8px;background:#0b4d89"></div>
<div class="a" style="left:390.7px;top:310.7px;width:23.0px;height:8px;background:#0b4d89"></div>
<div class="a" style="left:414.7px;top:310.7px;width:91.60000000000002px;height:8px;background:#0b4d89"></div>
<div class="a" style="left:507.3px;top:310.7px;width:55.400000000000034px;height:8px;background:#0b4d89"></div>
<div class="a" style="left:563.7px;top:310.7px;width:55.799999999999955px;height:8px;background:#0b4d89"></div>
<div class="a" style="left:620.5px;top:310.7px;width:21.5px;height:8px;background:#0b4d89"></div>
<div class="a" style="left:643px;top:310.7px;width:18.5px;height:8px;background:#0b4d89"></div>
<div class="a" style="left:662.5px;top:310.7px;width:8.700000000000045px;height:8px;background:#0b4d89"></div>
<div class="a" style="left:672.2px;top:310.7px;width:9.5px;height:8px;background:#0b4d89"></div>
<div class="a" style="left:682.7px;top:310.7px;width:31.699999999999932px;height:8px;background:#0b4d89"></div>
<div class="a" style="left:715.4px;top:310.7px;width:15.850000000000023px;height:8px;background:#0b4d89"></div>
<div class="a" style="left:732.25px;top:310.7px;width:15.75px;height:8px;background:#0b4d89"></div>
<div class="a" style="left:749px;top:310.7px;width:9px;height:8px;background:#0b4d89"></div>
<div class="cl" style="left:38px;top:310.7px;width:32.0px;height:8px"><div class="c" style="left:0.5px;top:1.25px;color:#ffffff;font-size:7.4px;font-weight:bold;-webkit-text-stroke:0.08px currentColor;transform:scaleX(0.955)">3</div></div>
<div class="cl" style="left:71.2px;top:310.7px;width:55.3px;height:8px"><div class="c" style="left:0.5px;top:1.25px;color:#ffffff;font-size:7.4px;font-weight:bold;-webkit-text-stroke:0.08px currentColor;transform:scaleX(0.955)">09:55:16.18</div></div>
<div class="cl" style="left:320.5px;top:310.7px;width:23.49999999999999px;height:8px"><div class="c" style="left:0.5px;top:1.25px;color:#ffffff;font-size:7.4px;font-weight:bold;-webkit-text-stroke:0.08px currentColor;transform:scaleX(0.88)">A</div></div>
<div class="cl" style="left:345.2px;top:310.7px;width:44.3px;height:8px"><div class="c" style="left:0.5px;top:1.25px;color:#ffffff;font-size:7.4px;font-weight:bold;-webkit-text-stroke:0.08px currentColor;transform:scaleX(0.88)">BALANCE-BE</div></div>
<div class="cl" style="left:414.7px;top:310.7px;width:91.40000000000002px;height:8px"><div class="c" style="left:0.5px;top:1.25px;color:#ffffff;font-size:7.4px;font-weight:bold;-webkit-text-stroke:0.08px currentColor;transform:scaleX(0.88)">BALANCE-BEAM-30</div></div>
<div class="cl" style="left:507.3px;top:310.7px;width:55.20000000000003px;height:8px"><div class="c" style="left:0.5px;top:1.25px;color:#ffffff;font-size:7.4px;font-weight:bold;-webkit-text-stroke:0.08px currentColor;transform:scaleX(0.955)">00:00:30.00</div></div>
<div class="cl" style="left:563.7px;top:310.7px;width:55.59999999999995px;height:8px"><div class="c" style="left:0.5px;top:1.25px;color:#ffffff;font-size:7.4px;font-weight:bold;-webkit-text-stroke:0.08px currentColor;transform:scaleX(0.955)">00:00:00.00</div></div>
<div class="cl" style="left:662.5px;top:310.7px;width:8.500000000000046px;height:8px"><div class="c" style="left:0.5px;top:1.25px;color:#dcc6a2;font-size:7.4px;font-weight:bold;-webkit-text-stroke:0.08px currentColor;transform:scaleX(0.88)">Y</div></div>
<div class="cl" style="left:672.2px;top:310.7px;width:9.3px;height:8px"><div class="c" style="left:0.5px;top:1.25px;color:#ffffff;font-size:7.4px;font-weight:bold;-webkit-text-stroke:0.08px currentColor;transform:scaleX(0.88)">S</div></div>
<div class="cl" style="left:715.4px;top:310.7px;width:15.650000000000023px;height:8px"><div class="c" style="left:0.5px;top:1.25px;color:#ffffff;font-size:7.4px;font-weight:bold;-webkit-text-stroke:0.08px currentColor;transform:scaleX(0.955)">0</div></div>
<div class="a" style="left:37px;top:319.7px;width:33.2px;height:8px;background:#5b5b5b"></div>
<div class="a" style="left:71.2px;top:319.7px;width:55.5px;height:8px;background:#0b4d89"></div>
<div class="a" style="left:127.7px;top:319.7px;width:46.3px;height:8px;background:#0b4d89"></div>
<div class="a" style="left:175px;top:319.7px;width:36.69999999999999px;height:8px;background:#0b4d89"></div>
<div class="a" style="left:212.7px;top:319.7px;width:36.0px;height:8px;background:#0b4d89"></div>
<div class="a" style="left:249.7px;top:319.7px;width:45.80000000000001px;height:8px;background:#0b4d89"></div>
<div class="a" style="left:296.5px;top:319.7px;width:23.0px;height:8px;background:#0b4d89"></div>
<div class="a" style="left:320.5px;top:319.7px;width:23.69999999999999px;height:8px;background:#0b4d89"></div>
<div class="a" style="left:345.2px;top:319.7px;width:44.5px;height:8px;background:#0b4d89"></div>
<div class="a" style="left:390.7px;top:319.7px;width:23.0px;height:8px;background:#0b4d89"></div>
<div class="a" style="left:414.7px;top:319.7px;width:91.60000000000002px;height:8px;background:#0b4d89"></div>
<div class="a" style="left:507.3px;top:319.7px;width:55.400000000000034px;height:8px;background:#0b4d89"></div>
<div class="a" style="left:563.7px;top:319.7px;width:55.799999999999955px;height:8px;background:#0b4d89"></div>
<div class="a" style="left:620.5px;top:319.7px;width:21.5px;height:8px;background:#0b4d89"></div>
<div class="a" style="left:643px;top:319.7px;width:18.5px;height:8px;background:#0b4d89"></div>
<div class="a" style="left:662.5px;top:319.7px;width:8.700000000000045px;height:8px;background:#0b4d89"></div>
<div class="a" style="left:672.2px;top:319.7px;width:9.5px;height:8px;background:#0b4d89"></div>
<div class="a" style="left:682.7px;top:319.7px;width:31.699999999999932px;height:8px;background:#0b4d89"></div>
<div class="a" style="left:715.4px;top:319.7px;width:15.850000000000023px;height:8px;background:#0b4d89"></div>
<div class="a" style="left:732.25px;top:319.7px;width:15.75px;height:8px;background:#0b4d89"></div>
<div class="a" style="left:749px;top:319.7px;width:9px;height:8px;background:#0b4d89"></div>
<div class="cl" style="left:38px;top:319.7px;width:32.0px;height:8px"><div class="c" style="left:0.5px;top:1.25px;color:#ffffff;font-size:7.4px;font-weight:bold;-webkit-text-stroke:0.08px currentColor;transform:scaleX(0.955)">4</div></div>
<div class="cl" style="left:71.2px;top:319.7px;width:55.3px;height:8px"><div class="c" style="left:0.5px;top:1.25px;color:#ffffff;font-size:7.4px;font-weight:bold;-webkit-text-stroke:0.08px currentColor;transform:scaleX(0.955)">09:54:56.18</div></div>
<div class="cl" style="left:320.5px;top:319.7px;width:23.49999999999999px;height:8px"><div class="c" style="left:0.5px;top:1.25px;color:#ffffff;font-size:7.4px;font-weight:bold;-webkit-text-stroke:0.08px currentColor;transform:scaleX(0.88)">A</div></div>
<div class="cl" style="left:345.2px;top:319.7px;width:44.3px;height:8px"><div class="c" style="left:0.5px;top:1.25px;color:#ffffff;font-size:7.4px;font-weight:bold;-webkit-text-stroke:0.08px currentColor;transform:scaleX(0.88)">BACK2SCHOI</div></div>
<div class="cl" style="left:414.7px;top:319.7px;width:91.40000000000002px;height:8px"><div class="c" style="left:0.5px;top:1.25px;color:#ffffff;font-size:7.4px;font-weight:bold;-webkit-text-stroke:0.08px currentColor;transform:scaleX(0.88)">BACK2SCHOOL-20</div></div>
<div class="cl" style="left:507.3px;top:319.7px;width:55.20000000000003px;height:8px"><div class="c" style="left:0.5px;top:1.25px;color:#ffffff;font-size:7.4px;font-weight:bold;-webkit-text-stroke:0.08px currentColor;transform:scaleX(0.955)">00:00:20.00</div></div>
<div class="cl" style="left:563.7px;top:319.7px;width:55.59999999999995px;height:8px"><div class="c" style="left:0.5px;top:1.25px;color:#ffffff;font-size:7.4px;font-weight:bold;-webkit-text-stroke:0.08px currentColor;transform:scaleX(0.955)">00:00:00.00</div></div>
<div class="cl" style="left:662.5px;top:319.7px;width:8.500000000000046px;height:8px"><div class="c" style="left:0.5px;top:1.25px;color:#dcc6a2;font-size:7.4px;font-weight:bold;-webkit-text-stroke:0.08px currentColor;transform:scaleX(0.88)">Y</div></div>
<div class="cl" style="left:672.2px;top:319.7px;width:9.3px;height:8px"><div class="c" style="left:0.5px;top:1.25px;color:#ffffff;font-size:7.4px;font-weight:bold;-webkit-text-stroke:0.08px currentColor;transform:scaleX(0.88)">S</div></div>
<div class="cl" style="left:715.4px;top:319.7px;width:15.650000000000023px;height:8px"><div class="c" style="left:0.5px;top:1.25px;color:#ffffff;font-size:7.4px;font-weight:bold;-webkit-text-stroke:0.08px currentColor;transform:scaleX(0.955)">0</div></div>
<div class="a" style="left:37px;top:328.7px;width:33.2px;height:8px;background:#5b5b5b"></div>
<div class="a" style="left:71.2px;top:328.7px;width:55.5px;height:8px;background:#0b4d89"></div>
<div class="a" style="left:127.7px;top:328.7px;width:46.3px;height:8px;background:#0b4d89"></div>
<div class="a" style="left:175px;top:328.7px;width:36.69999999999999px;height:8px;background:#0b4d89"></div>
<div class="a" style="left:212.7px;top:328.7px;width:36.0px;height:8px;background:#0b4d89"></div>
<div class="a" style="left:249.7px;top:328.7px;width:45.80000000000001px;height:8px;background:#0b4d89"></div>
<div class="a" style="left:296.5px;top:328.7px;width:23.0px;height:8px;background:#0b4d89"></div>
<div class="a" style="left:320.5px;top:328.7px;width:23.69999999999999px;height:8px;background:#0b4d89"></div>
<div class="a" style="left:345.2px;top:328.7px;width:44.5px;height:8px;background:#0b4d89"></div>
<div class="a" style="left:390.7px;top:328.7px;width:23.0px;height:8px;background:#0b4d89"></div>
<div class="a" style="left:414.7px;top:328.7px;width:91.60000000000002px;height:8px;background:#0b4d89"></div>
<div class="a" style="left:507.3px;top:328.7px;width:55.400000000000034px;height:8px;background:#0b4d89"></div>
<div class="a" style="left:563.7px;top:328.7px;width:55.799999999999955px;height:8px;background:#0b4d89"></div>
<div class="a" style="left:620.5px;top:328.7px;width:21.5px;height:8px;background:#0b4d89"></div>
<div class="a" style="left:643px;top:328.7px;width:18.5px;height:8px;background:#0b4d89"></div>
<div class="a" style="left:662.5px;top:328.7px;width:8.700000000000045px;height:8px;background:#0b4d89"></div>
<div class="a" style="left:672.2px;top:328.7px;width:9.5px;height:8px;background:#0b4d89"></div>
<div class="a" style="left:682.7px;top:328.7px;width:31.699999999999932px;height:8px;background:#0b4d89"></div>
<div class="a" style="left:715.4px;top:328.7px;width:15.850000000000023px;height:8px;background:#0b4d89"></div>
<div class="a" style="left:732.25px;top:328.7px;width:15.75px;height:8px;background:#0b4d89"></div>
<div class="a" style="left:749px;top:328.7px;width:9px;height:8px;background:#0b4d89"></div>
<div class="cl" style="left:38px;top:328.7px;width:32.0px;height:8px"><div class="c" style="left:0.5px;top:1.25px;color:#ffffff;font-size:7.4px;font-weight:bold;-webkit-text-stroke:0.08px currentColor;transform:scaleX(0.955)">5</div></div>
<div class="cl" style="left:71.2px;top:328.7px;width:55.3px;height:8px"><div class="c" style="left:0.5px;top:1.25px;color:#ffffff;font-size:7.4px;font-weight:bold;-webkit-text-stroke:0.08px currentColor;transform:scaleX(0.955)">00:00:00.00</div></div>
<div class="cl" style="left:320.5px;top:328.7px;width:23.49999999999999px;height:8px"><div class="c" style="left:0.5px;top:1.25px;color:#ffffff;font-size:7.4px;font-weight:bold;-webkit-text-stroke:0.08px currentColor;transform:scaleX(0.88)">A</div></div>
<div class="cl" style="left:345.2px;top:328.7px;width:44.3px;height:8px"><div class="c" style="left:0.5px;top:1.25px;color:#ffffff;font-size:7.4px;font-weight:bold;-webkit-text-stroke:0.08px currentColor;transform:scaleX(0.88)">FOOD-BLOG-</div></div>
<div class="cl" style="left:414.7px;top:328.7px;width:91.40000000000002px;height:8px"><div class="c" style="left:0.5px;top:1.25px;color:#ffffff;font-size:7.4px;font-weight:bold;-webkit-text-stroke:0.08px currentColor;transform:scaleX(0.88)">FOOD-BLOG-10</div></div>
<div class="cl" style="left:507.3px;top:328.7px;width:55.20000000000003px;height:8px"><div class="c" style="left:0.5px;top:1.25px;color:#ffffff;font-size:7.4px;font-weight:bold;-webkit-text-stroke:0.08px currentColor;transform:scaleX(0.955)">00:00:10.00</div></div>
<div class="cl" style="left:563.7px;top:328.7px;width:55.59999999999995px;height:8px"><div class="c" style="left:0.5px;top:1.25px;color:#ffffff;font-size:7.4px;font-weight:bold;-webkit-text-stroke:0.08px currentColor;transform:scaleX(0.955)">00:00:00.00</div></div>
<div class="cl" style="left:662.5px;top:328.7px;width:8.500000000000046px;height:8px"><div class="c" style="left:0.5px;top:1.25px;color:#dcc6a2;font-size:7.4px;font-weight:bold;-webkit-text-stroke:0.08px currentColor;transform:scaleX(0.88)">Y</div></div>
<div class="cl" style="left:672.2px;top:328.7px;width:9.3px;height:8px"><div class="c" style="left:0.5px;top:1.25px;color:#ffffff;font-size:7.4px;font-weight:bold;-webkit-text-stroke:0.08px currentColor;transform:scaleX(0.88)">S</div></div>
<div class="cl" style="left:715.4px;top:328.7px;width:15.650000000000023px;height:8px"><div class="c" style="left:0.5px;top:1.25px;color:#ffffff;font-size:7.4px;font-weight:bold;-webkit-text-stroke:0.08px currentColor;transform:scaleX(0.955)">0</div></div>
<div class="a" style="left:37px;top:337.7px;width:33.2px;height:8px;background:#5b5b5b"></div>
<div class="a" style="left:71.2px;top:337.7px;width:55.5px;height:8px;background:#0b4d89"></div>
<div class="a" style="left:127.7px;top:337.7px;width:46.3px;height:8px;background:#0b4d89"></div>
<div class="a" style="left:175px;top:337.7px;width:36.69999999999999px;height:8px;background:#0b4d89"></div>
<div class="a" style="left:212.7px;top:337.7px;width:36.0px;height:8px;background:#0b4d89"></div>
<div class="a" style="left:249.7px;top:337.7px;width:45.80000000000001px;height:8px;background:#0b4d89"></div>
<div class="a" style="left:296.5px;top:337.7px;width:23.0px;height:8px;background:#0b4d89"></div>
<div class="a" style="left:320.5px;top:337.7px;width:23.69999999999999px;height:8px;background:#0b4d89"></div>
<div class="a" style="left:345.2px;top:337.7px;width:44.5px;height:8px;background:#0b4d89"></div>
<div class="a" style="left:390.7px;top:337.7px;width:23.0px;height:8px;background:#0b4d89"></div>
<div class="a" style="left:414.7px;top:337.7px;width:91.60000000000002px;height:8px;background:#0b4d89"></div>
<div class="a" style="left:507.3px;top:337.7px;width:55.400000000000034px;height:8px;background:#0b4d89"></div>
<div class="a" style="left:563.7px;top:337.7px;width:55.799999999999955px;height:8px;background:#0b4d89"></div>
<div class="a" style="left:620.5px;top:337.7px;width:21.5px;height:8px;background:#0b4d89"></div>
<div class="a" style="left:643px;top:337.7px;width:18.5px;height:8px;background:#0b4d89"></div>
<div class="a" style="left:662.5px;top:337.7px;width:8.700000000000045px;height:8px;background:#0b4d89"></div>
<div class="a" style="left:672.2px;top:337.7px;width:9.5px;height:8px;background:#0b4d89"></div>
<div class="a" style="left:682.7px;top:337.7px;width:31.699999999999932px;height:8px;background:#0b4d89"></div>
<div class="a" style="left:715.4px;top:337.7px;width:15.850000000000023px;height:8px;background:#0b4d89"></div>
<div class="a" style="left:732.25px;top:337.7px;width:15.75px;height:8px;background:#0b4d89"></div>
<div class="a" style="left:749px;top:337.7px;width:9px;height:8px;background:#0b4d89"></div>
<div class="cl" style="left:38px;top:337.7px;width:32.0px;height:8px"><div class="c" style="left:0.5px;top:1.25px;color:#ffffff;font-size:7.4px;font-weight:bold;-webkit-text-stroke:0.08px currentColor;transform:scaleX(0.955)">6</div></div>
<div class="cl" style="left:71.2px;top:337.7px;width:55.3px;height:8px"><div class="c" style="left:0.5px;top:1.25px;color:#ffffff;font-size:7.4px;font-weight:bold;-webkit-text-stroke:0.08px currentColor;transform:scaleX(0.955)">00:00:00.00</div></div>
<div class="cl" style="left:320.5px;top:337.7px;width:23.49999999999999px;height:8px"><div class="c" style="left:0.5px;top:1.25px;color:#ffffff;font-size:7.4px;font-weight:bold;-webkit-text-stroke:0.08px currentColor;transform:scaleX(0.88)">A</div></div>
<div class="cl" style="left:345.2px;top:337.7px;width:44.3px;height:8px"><div class="c" style="left:0.5px;top:1.25px;color:#ffffff;font-size:7.4px;font-weight:bold;-webkit-text-stroke:0.08px currentColor;transform:scaleX(0.88)">IC-ENERGY-1</div></div>
<div class="cl" style="left:414.7px;top:337.7px;width:91.40000000000002px;height:8px"><div class="c" style="left:0.5px;top:1.25px;color:#ffffff;font-size:7.4px;font-weight:bold;-webkit-text-stroke:0.08px currentColor;transform:scaleX(0.88)">IC-ENERGY-15</div></div>
<div class="cl" style="left:507.3px;top:337.7px;width:55.20000000000003px;height:8px"><div class="c" style="left:0.5px;top:1.25px;color:#ffffff;font-size:7.4px;font-weight:bold;-webkit-text-stroke:0.08px currentColor;transform:scaleX(0.955)">00:00:15.00</div></div>
<div class="cl" style="left:563.7px;top:337.7px;width:55.59999999999995px;height:8px"><div class="c" style="left:0.5px;top:1.25px;color:#ffffff;font-size:7.4px;font-weight:bold;-webkit-text-stroke:0.08px currentColor;transform:scaleX(0.955)">00:00:00.00</div></div>
<div class="cl" style="left:662.5px;top:337.7px;width:8.500000000000046px;height:8px"><div class="c" style="left:0.5px;top:1.25px;color:#dcc6a2;font-size:7.4px;font-weight:bold;-webkit-text-stroke:0.08px currentColor;transform:scaleX(0.88)">Y</div></div>
<div class="cl" style="left:672.2px;top:337.7px;width:9.3px;height:8px"><div class="c" style="left:0.5px;top:1.25px;color:#ffffff;font-size:7.4px;font-weight:bold;-webkit-text-stroke:0.08px currentColor;transform:scaleX(0.88)">S</div></div>
<div class="cl" style="left:715.4px;top:337.7px;width:15.650000000000023px;height:8px"><div class="c" style="left:0.5px;top:1.25px;color:#ffffff;font-size:7.4px;font-weight:bold;-webkit-text-stroke:0.08px currentColor;transform:scaleX(0.955)">0</div></div>
<div class="a" style="left:37px;top:346.7px;width:33.2px;height:8px;background:#5b5b5b"></div>
<div class="a" style="left:71.2px;top:346.7px;width:55.5px;height:8px;background:#0b4d89"></div>
<div class="a" style="left:127.7px;top:346.7px;width:46.3px;height:8px;background:#0b4d89"></div>
<div class="a" style="left:175px;top:346.7px;width:36.69999999999999px;height:8px;background:#0b4d89"></div>
<div class="a" style="left:212.7px;top:346.7px;width:36.0px;height:8px;background:#0b4d89"></div>
<div class="a" style="left:249.7px;top:346.7px;width:45.80000000000001px;height:8px;background:#0b4d89"></div>
<div class="a" style="left:296.5px;top:346.7px;width:23.0px;height:8px;background:#0b4d89"></div>
<div class="a" style="left:320.5px;top:346.7px;width:23.69999999999999px;height:8px;background:#0b4d89"></div>
<div class="a" style="left:345.2px;top:346.7px;width:44.5px;height:8px;background:#0b4d89"></div>
<div class="a" style="left:390.7px;top:346.7px;width:23.0px;height:8px;background:#0b4d89"></div>
<div class="a" style="left:414.7px;top:346.7px;width:91.60000000000002px;height:8px;background:#0b4d89"></div>
<div class="a" style="left:507.3px;top:346.7px;width:55.400000000000034px;height:8px;background:#0b4d89"></div>
<div class="a" style="left:563.7px;top:346.7px;width:55.799999999999955px;height:8px;background:#0b4d89"></div>
<div class="a" style="left:620.5px;top:346.7px;width:21.5px;height:8px;background:#0b4d89"></div>
<div class="a" style="left:643px;top:346.7px;width:18.5px;height:8px;background:#0b4d89"></div>
<div class="a" style="left:662.5px;top:346.7px;width:8.700000000000045px;height:8px;background:#0b4d89"></div>
<div class="a" style="left:672.2px;top:346.7px;width:9.5px;height:8px;background:#0b4d89"></div>
<div class="a" style="left:682.7px;top:346.7px;width:31.699999999999932px;height:8px;background:#0b4d89"></div>
<div class="a" style="left:715.4px;top:346.7px;width:15.850000000000023px;height:8px;background:#0b4d89"></div>
<div class="a" style="left:732.25px;top:346.7px;width:15.75px;height:8px;background:#0b4d89"></div>
<div class="a" style="left:749px;top:346.7px;width:9px;height:8px;background:#0b4d89"></div>
<div class="cl" style="left:38px;top:346.7px;width:32.0px;height:8px"><div class="c" style="left:0.5px;top:1.25px;color:#ffffff;font-size:7.4px;font-weight:bold;-webkit-text-stroke:0.08px currentColor;transform:scaleX(0.955)">7</div></div>
<div class="cl" style="left:71.2px;top:346.7px;width:55.3px;height:8px"><div class="c" style="left:0.5px;top:1.25px;color:#ffffff;font-size:7.4px;font-weight:bold;-webkit-text-stroke:0.08px currentColor;transform:scaleX(0.955)">00:00:00.00</div></div>
<div class="cl" style="left:320.5px;top:346.7px;width:23.49999999999999px;height:8px"><div class="c" style="left:0.5px;top:1.25px;color:#ffffff;font-size:7.4px;font-weight:bold;-webkit-text-stroke:0.08px currentColor;transform:scaleX(0.88)">A</div></div>
<div class="cl" style="left:345.2px;top:346.7px;width:44.3px;height:8px"><div class="c" style="left:0.5px;top:1.25px;color:#ffffff;font-size:7.4px;font-weight:bold;-webkit-text-stroke:0.08px currentColor;transform:scaleX(0.88)">ImagineComm</div></div>
<div class="cl" style="left:414.7px;top:346.7px;width:91.40000000000002px;height:8px"><div class="c" style="left:0.5px;top:1.25px;color:#ffffff;font-size:7.4px;font-weight:bold;-webkit-text-stroke:0.08px currentColor;transform:scaleX(0.88)">ImagineComms_Corporate_P</div></div>
<div class="cl" style="left:507.3px;top:346.7px;width:55.20000000000003px;height:8px"><div class="c" style="left:0.5px;top:1.25px;color:#ffffff;font-size:7.4px;font-weight:bold;-webkit-text-stroke:0.08px currentColor;transform:scaleX(0.955)">00:01:23.17</div></div>
<div class="cl" style="left:563.7px;top:346.7px;width:55.59999999999995px;height:8px"><div class="c" style="left:0.5px;top:1.25px;color:#ffffff;font-size:7.4px;font-weight:bold;-webkit-text-stroke:0.08px currentColor;transform:scaleX(0.955)">00:00:00.00</div></div>
<div class="cl" style="left:662.5px;top:346.7px;width:8.500000000000046px;height:8px"><div class="c" style="left:0.5px;top:1.25px;color:#dcc6a2;font-size:7.4px;font-weight:bold;-webkit-text-stroke:0.08px currentColor;transform:scaleX(0.88)">Y</div></div>
<div class="cl" style="left:672.2px;top:346.7px;width:9.3px;height:8px"><div class="c" style="left:0.5px;top:1.25px;color:#ffffff;font-size:7.4px;font-weight:bold;-webkit-text-stroke:0.08px currentColor;transform:scaleX(0.88)">S</div></div>
<div class="cl" style="left:715.4px;top:346.7px;width:15.650000000000023px;height:8px"><div class="c" style="left:0.5px;top:1.25px;color:#ffffff;font-size:7.4px;font-weight:bold;-webkit-text-stroke:0.08px currentColor;transform:scaleX(0.955)">0</div></div>
<div class="a" style="left:37px;top:355.7px;width:33.2px;height:8px;background:#5b5b5b"></div>
<div class="a" style="left:71.2px;top:355.7px;width:55.5px;height:8px;background:#8e52b2"></div>
<div class="a" style="left:127.7px;top:355.7px;width:46.3px;height:8px;background:#8e52b2"></div>
<div class="a" style="left:175px;top:355.7px;width:36.69999999999999px;height:8px;background:#8e52b2"></div>
<div class="a" style="left:212.7px;top:355.7px;width:36.0px;height:8px;background:#8e52b2"></div>
<div class="a" style="left:249.7px;top:355.7px;width:45.80000000000001px;height:8px;background:#8e52b2"></div>
<div class="a" style="left:296.5px;top:355.7px;width:23.0px;height:8px;background:#8e52b2"></div>
<div class="a" style="left:320.5px;top:355.7px;width:23.69999999999999px;height:8px;background:#8e52b2"></div>
<div class="a" style="left:345.2px;top:355.7px;width:44.5px;height:8px;background:#8e52b2"></div>
<div class="a" style="left:390.7px;top:355.7px;width:23.0px;height:8px;background:#8e52b2"></div>
<div class="a" style="left:414.7px;top:355.7px;width:91.60000000000002px;height:8px;background:#8e52b2"></div>
<div class="a" style="left:507.3px;top:355.7px;width:55.400000000000034px;height:8px;background:#8e52b2"></div>
<div class="a" style="left:563.7px;top:355.7px;width:55.799999999999955px;height:8px;background:#8e52b2"></div>
<div class="a" style="left:620.5px;top:355.7px;width:21.5px;height:8px;background:#8e52b2"></div>
<div class="a" style="left:643px;top:355.7px;width:18.5px;height:8px;background:#8e52b2"></div>
<div class="a" style="left:662.5px;top:355.7px;width:8.700000000000045px;height:8px;background:#8e52b2"></div>
<div class="a" style="left:672.2px;top:355.7px;width:9.5px;height:8px;background:#8e52b2"></div>
<div class="a" style="left:682.7px;top:355.7px;width:31.699999999999932px;height:8px;background:#8e52b2"></div>
<div class="a" style="left:715.4px;top:355.7px;width:15.850000000000023px;height:8px;background:#8e52b2"></div>
<div class="a" style="left:732.25px;top:355.7px;width:15.75px;height:8px;background:#8e52b2"></div>
<div class="a" style="left:749px;top:355.7px;width:9px;height:8px;background:#8e52b2"></div>
<div class="cl" style="left:38px;top:355.7px;width:32.0px;height:8px"><div class="c" style="left:0.5px;top:1.25px;color:#ffffff;font-size:7.4px;font-weight:bold;-webkit-text-stroke:0.08px currentColor;transform:scaleX(0.955)">8</div></div>
<div class="cl" style="left:71.2px;top:355.7px;width:55.3px;height:8px"><div class="c" style="left:0.5px;top:1.25px;color:#ffffff;font-size:7.4px;font-weight:bold;-webkit-text-stroke:0.08px currentColor;transform:scaleX(0.955)">00:00:00.00</div></div>
<div class="cl" style="left:296.5px;top:355.7px;width:22.8px;height:8px"><div class="c" style="left:0.5px;top:1.25px;color:#ffffff;font-size:7.4px;font-weight:bold;-webkit-text-stroke:0.08px currentColor;transform:scaleX(0.88)">sAV</div></div>
<div class="cl" style="left:320.5px;top:355.7px;width:23.49999999999999px;height:8px"><div class="c" style="left:0.5px;top:1.25px;color:#ffffff;font-size:7.4px;font-weight:bold;-webkit-text-stroke:0.08px currentColor;transform:scaleX(0.88)">PT</div></div>
<div class="cl" style="left:345.2px;top:355.7px;width:44.3px;height:8px"><div class="c" style="left:0.5px;top:1.25px;color:#ffffff;font-size:7.4px;font-weight:bold;-webkit-text-stroke:0.08px currentColor;transform:scaleX(0.88)">ICONX</div></div>
<div class="cl" style="left:414.7px;top:355.7px;width:91.40000000000002px;height:8px"><div class="c" style="left:0.5px;top:1.25px;color:#ffffff;font-size:7.4px;font-weight:bold;-webkit-text-stroke:0.08px currentColor;transform:scaleX(0.88)">ProgSalvo:VGFX_CTC_PAL,I</div></div>
<div class="cl" style="left:507.3px;top:355.7px;width:55.20000000000003px;height:8px"><div class="c" style="left:0.5px;top:1.25px;color:#ffffff;font-size:7.4px;font-weight:bold;-webkit-text-stroke:0.08px currentColor;transform:scaleX(0.955)">00:00:30.00</div></div>
<div class="cl" style="left:662.5px;top:355.7px;width:8.500000000000046px;height:8px"><div class="c" style="left:0.5px;top:1.25px;color:#dcc6a2;font-size:7.4px;font-weight:bold;-webkit-text-stroke:0.08px currentColor;transform:scaleX(0.88)">Y</div></div>
<div class="cl" style="left:672.2px;top:355.7px;width:9.3px;height:8px"><div class="c" style="left:0.5px;top:1.25px;color:#ffffff;font-size:7.4px;font-weight:bold;-webkit-text-stroke:0.08px currentColor;transform:scaleX(0.88)">S</div></div>
<div class="cl" style="left:715.4px;top:355.7px;width:15.650000000000023px;height:8px"><div class="c" style="left:0.5px;top:1.25px;color:#ffffff;font-size:7.4px;font-weight:bold;-webkit-text-stroke:0.08px currentColor;transform:scaleX(0.955)">0</div></div>
<div class="a" style="left:37px;top:364.7px;width:33.2px;height:8px;background:#5b5b5b"></div>
<div class="a" style="left:71.2px;top:364.7px;width:55.5px;height:8px;background:#0b4d89"></div>
<div class="a" style="left:127.7px;top:364.7px;width:46.3px;height:8px;background:#0b4d89"></div>
<div class="a" style="left:175px;top:364.7px;width:36.69999999999999px;height:8px;background:#0b4d89"></div>
<div class="a" style="left:212.7px;top:364.7px;width:36.0px;height:8px;background:#0b4d89"></div>
<div class="a" style="left:249.7px;top:364.7px;width:45.80000000000001px;height:8px;background:#0b4d89"></div>
<div class="a" style="left:296.5px;top:364.7px;width:23.0px;height:8px;background:#0b4d89"></div>
<div class="a" style="left:320.5px;top:364.7px;width:23.69999999999999px;height:8px;background:#0b4d89"></div>
<div class="a" style="left:345.2px;top:364.7px;width:44.5px;height:8px;background:#0b4d89"></div>
<div class="a" style="left:390.7px;top:364.7px;width:23.0px;height:8px;background:#0b4d89"></div>
<div class="a" style="left:414.7px;top:364.7px;width:91.60000000000002px;height:8px;background:#0b4d89"></div>
<div class="a" style="left:507.3px;top:364.7px;width:55.400000000000034px;height:8px;background:#0b4d89"></div>
<div class="a" style="left:563.7px;top:364.7px;width:55.799999999999955px;height:8px;background:#0b4d89"></div>
<div class="a" style="left:620.5px;top:364.7px;width:21.5px;height:8px;background:#0b4d89"></div>
<div class="a" style="left:643px;top:364.7px;width:18.5px;height:8px;background:#0b4d89"></div>
<div class="a" style="left:662.5px;top:364.7px;width:8.700000000000045px;height:8px;background:#0b4d89"></div>
<div class="a" style="left:672.2px;top:364.7px;width:9.5px;height:8px;background:#0b4d89"></div>
<div class="a" style="left:682.7px;top:364.7px;width:31.699999999999932px;height:8px;background:#0b4d89"></div>
<div class="a" style="left:715.4px;top:364.7px;width:15.850000000000023px;height:8px;background:#0b4d89"></div>
<div class="a" style="left:732.25px;top:364.7px;width:15.75px;height:8px;background:#0b4d89"></div>
<div class="a" style="left:749px;top:364.7px;width:9px;height:8px;background:#0b4d89"></div>
<div class="cl" style="left:38px;top:364.7px;width:32.0px;height:8px"><div class="c" style="left:0.5px;top:1.25px;color:#ffffff;font-size:7.4px;font-weight:bold;-webkit-text-stroke:0.08px currentColor;transform:scaleX(0.955)">9</div></div>
<div class="cl" style="left:71.2px;top:364.7px;width:55.3px;height:8px"><div class="c" style="left:0.5px;top:1.25px;color:#ffffff;font-size:7.4px;font-weight:bold;-webkit-text-stroke:0.08px currentColor;transform:scaleX(0.955)">00:00:00.00</div></div>
<div class="cl" style="left:320.5px;top:364.7px;width:23.49999999999999px;height:8px"><div class="c" style="left:0.5px;top:1.25px;color:#ffffff;font-size:7.4px;font-weight:bold;-webkit-text-stroke:0.08px currentColor;transform:scaleX(0.88)">A</div></div>
<div class="cl" style="left:345.2px;top:364.7px;width:44.3px;height:8px"><div class="c" style="left:0.5px;top:1.25px;color:#ffffff;font-size:7.4px;font-weight:bold;-webkit-text-stroke:0.08px currentColor;transform:scaleX(0.88)">FOOD-BLOG-</div></div>
<div class="cl" style="left:414.7px;top:364.7px;width:91.40000000000002px;height:8px"><div class="c" style="left:0.5px;top:1.25px;color:#ffffff;font-size:7.4px;font-weight:bold;-webkit-text-stroke:0.08px currentColor;transform:scaleX(0.88)">FOOD-BLOG-10</div></div>
<div class="cl" style="left:507.3px;top:364.7px;width:55.20000000000003px;height:8px"><div class="c" style="left:0.5px;top:1.25px;color:#ffffff;font-size:7.4px;font-weight:bold;-webkit-text-stroke:0.08px currentColor;transform:scaleX(0.955)">00:00:10.00</div></div>
<div class="cl" style="left:563.7px;top:364.7px;width:55.59999999999995px;height:8px"><div class="c" style="left:0.5px;top:1.25px;color:#ffffff;font-size:7.4px;font-weight:bold;-webkit-text-stroke:0.08px currentColor;transform:scaleX(0.955)">00:00:00.00</div></div>
<div class="cl" style="left:662.5px;top:364.7px;width:8.500000000000046px;height:8px"><div class="c" style="left:0.5px;top:1.25px;color:#dcc6a2;font-size:7.4px;font-weight:bold;-webkit-text-stroke:0.08px currentColor;transform:scaleX(0.88)">Y</div></div>
<div class="cl" style="left:672.2px;top:364.7px;width:9.3px;height:8px"><div class="c" style="left:0.5px;top:1.25px;color:#ffffff;font-size:7.4px;font-weight:bold;-webkit-text-stroke:0.08px currentColor;transform:scaleX(0.88)">S</div></div>
<div class="cl" style="left:715.4px;top:364.7px;width:15.650000000000023px;height:8px"><div class="c" style="left:0.5px;top:1.25px;color:#ffffff;font-size:7.4px;font-weight:bold;-webkit-text-stroke:0.08px currentColor;transform:scaleX(0.955)">0</div></div>
<div class="a" style="left:37px;top:373.7px;width:33.2px;height:8px;background:#5b5b5b"></div>
<div class="a" style="left:71.2px;top:373.7px;width:55.5px;height:8px;background:#0b4d89"></div>
<div class="a" style="left:127.7px;top:373.7px;width:46.3px;height:8px;background:#0b4d89"></div>
<div class="a" style="left:175px;top:373.7px;width:36.69999999999999px;height:8px;background:#0b4d89"></div>
<div class="a" style="left:212.7px;top:373.7px;width:36.0px;height:8px;background:#0b4d89"></div>
<div class="a" style="left:249.7px;top:373.7px;width:45.80000000000001px;height:8px;background:#0b4d89"></div>
<div class="a" style="left:296.5px;top:373.7px;width:23.0px;height:8px;background:#0b4d89"></div>
<div class="a" style="left:320.5px;top:373.7px;width:23.69999999999999px;height:8px;background:#0b4d89"></div>
<div class="a" style="left:345.2px;top:373.7px;width:44.5px;height:8px;background:#0b4d89"></div>
<div class="a" style="left:390.7px;top:373.7px;width:23.0px;height:8px;background:#0b4d89"></div>
<div class="a" style="left:414.7px;top:373.7px;width:91.60000000000002px;height:8px;background:#0b4d89"></div>
<div class="a" style="left:507.3px;top:373.7px;width:55.400000000000034px;height:8px;background:#0b4d89"></div>
<div class="a" style="left:563.7px;top:373.7px;width:55.799999999999955px;height:8px;background:#0b4d89"></div>
<div class="a" style="left:620.5px;top:373.7px;width:21.5px;height:8px;background:#0b4d89"></div>
<div class="a" style="left:643px;top:373.7px;width:18.5px;height:8px;background:#0b4d89"></div>
<div class="a" style="left:662.5px;top:373.7px;width:8.700000000000045px;height:8px;background:#0b4d89"></div>
<div class="a" style="left:672.2px;top:373.7px;width:9.5px;height:8px;background:#0b4d89"></div>
<div class="a" style="left:682.7px;top:373.7px;width:31.699999999999932px;height:8px;background:#0b4d89"></div>
<div class="a" style="left:715.4px;top:373.7px;width:15.850000000000023px;height:8px;background:#0b4d89"></div>
<div class="a" style="left:732.25px;top:373.7px;width:15.75px;height:8px;background:#0b4d89"></div>
<div class="a" style="left:749px;top:373.7px;width:9px;height:8px;background:#0b4d89"></div>
<div class="cl" style="left:38px;top:373.7px;width:32.0px;height:8px"><div class="c" style="left:0.5px;top:1.25px;color:#ffffff;font-size:7.4px;font-weight:bold;-webkit-text-stroke:0.08px currentColor;transform:scaleX(0.955)">10</div></div>
<div class="cl" style="left:71.2px;top:373.7px;width:55.3px;height:8px"><div class="c" style="left:0.5px;top:1.25px;color:#ffffff;font-size:7.4px;font-weight:bold;-webkit-text-stroke:0.08px currentColor;transform:scaleX(0.955)">00:00:00.00</div></div>
<div class="cl" style="left:320.5px;top:373.7px;width:23.49999999999999px;height:8px"><div class="c" style="left:0.5px;top:1.25px;color:#ffffff;font-size:7.4px;font-weight:bold;-webkit-text-stroke:0.08px currentColor;transform:scaleX(0.88)">A</div></div>
<div class="cl" style="left:345.2px;top:373.7px;width:44.3px;height:8px"><div class="c" style="left:0.5px;top:1.25px;color:#ffffff;font-size:7.4px;font-weight:bold;-webkit-text-stroke:0.08px currentColor;transform:scaleX(0.88)">IC-ENERGY-1</div></div>
<div class="cl" style="left:414.7px;top:373.7px;width:91.40000000000002px;height:8px"><div class="c" style="left:0.5px;top:1.25px;color:#ffffff;font-size:7.4px;font-weight:bold;-webkit-text-stroke:0.08px currentColor;transform:scaleX(0.88)">IC-ENERGY-15</div></div>
<div class="cl" style="left:507.3px;top:373.7px;width:55.20000000000003px;height:8px"><div class="c" style="left:0.5px;top:1.25px;color:#ffffff;font-size:7.4px;font-weight:bold;-webkit-text-stroke:0.08px currentColor;transform:scaleX(0.955)">00:00:15.00</div></div>
<div class="cl" style="left:563.7px;top:373.7px;width:55.59999999999995px;height:8px"><div class="c" style="left:0.5px;top:1.25px;color:#ffffff;font-size:7.4px;font-weight:bold;-webkit-text-stroke:0.08px currentColor;transform:scaleX(0.955)">00:00:00.00</div></div>
<div class="cl" style="left:662.5px;top:373.7px;width:8.500000000000046px;height:8px"><div class="c" style="left:0.5px;top:1.25px;color:#dcc6a2;font-size:7.4px;font-weight:bold;-webkit-text-stroke:0.08px currentColor;transform:scaleX(0.88)">Y</div></div>
<div class="cl" style="left:672.2px;top:373.7px;width:9.3px;height:8px"><div class="c" style="left:0.5px;top:1.25px;color:#ffffff;font-size:7.4px;font-weight:bold;-webkit-text-stroke:0.08px currentColor;transform:scaleX(0.88)">S</div></div>
<div class="cl" style="left:715.4px;top:373.7px;width:15.650000000000023px;height:8px"><div class="c" style="left:0.5px;top:1.25px;color:#ffffff;font-size:7.4px;font-weight:bold;-webkit-text-stroke:0.08px currentColor;transform:scaleX(0.955)">0</div></div>
<div class="a" style="left:37px;top:382.7px;width:33.2px;height:4.300000000000011px;background:#5b5b5b"></div>
<div class="a" style="left:71.2px;top:382.7px;width:55.5px;height:4.300000000000011px;background:#0b4d89"></div>
<div class="a" style="left:127.7px;top:382.7px;width:46.3px;height:4.300000000000011px;background:#0b4d89"></div>
<div class="a" style="left:175px;top:382.7px;width:36.69999999999999px;height:4.300000000000011px;background:#0b4d89"></div>
<div class="a" style="left:212.7px;top:382.7px;width:36.0px;height:4.300000000000011px;background:#0b4d89"></div>
<div class="a" style="left:249.7px;top:382.7px;width:45.80000000000001px;height:4.300000000000011px;background:#0b4d89"></div>
<div class="a" style="left:296.5px;top:382.7px;width:23.0px;height:4.300000000000011px;background:#0b4d89"></div>
<div class="a" style="left:320.5px;top:382.7px;width:23.69999999999999px;height:4.300000000000011px;background:#0b4d89"></div>
<div class="a" style="left:345.2px;top:382.7px;width:44.5px;height:4.300000000000011px;background:#0b4d89"></div>
<div class="a" style="left:390.7px;top:382.7px;width:23.0px;height:4.300000000000011px;background:#0b4d89"></div>
<div class="a" style="left:414.7px;top:382.7px;width:91.60000000000002px;height:4.300000000000011px;background:#0b4d89"></div>
<div class="a" style="left:507.3px;top:382.7px;width:55.400000000000034px;height:4.300000000000011px;background:#0b4d89"></div>
<div class="a" style="left:563.7px;top:382.7px;width:55.799999999999955px;height:4.300000000000011px;background:#0b4d89"></div>
<div class="a" style="left:620.5px;top:382.7px;width:21.5px;height:4.300000000000011px;background:#0b4d89"></div>
<div class="a" style="left:643px;top:382.7px;width:18.5px;height:4.300000000000011px;background:#0b4d89"></div>
<div class="a" style="left:662.5px;top:382.7px;width:8.700000000000045px;height:4.300000000000011px;background:#0b4d89"></div>
<div class="a" style="left:672.2px;top:382.7px;width:9.5px;height:4.300000000000011px;background:#0b4d89"></div>
<div class="a" style="left:682.7px;top:382.7px;width:31.699999999999932px;height:4.300000000000011px;background:#0b4d89"></div>
<div class="a" style="left:715.4px;top:382.7px;width:15.850000000000023px;height:4.300000000000011px;background:#0b4d89"></div>
<div class="a" style="left:732.25px;top:382.7px;width:15.75px;height:4.300000000000011px;background:#0b4d89"></div>
<div class="a" style="left:749px;top:382.7px;width:9px;height:4.300000000000011px;background:#0b4d89"></div>
<div class="cl" style="left:38px;top:382.7px;width:32.0px;height:4.300000000000011px"><div class="c" style="left:0.5px;top:1.25px;color:#ffffff;font-size:7.4px;font-weight:bold;-webkit-text-stroke:0.08px currentColor;transform:scaleX(0.955)">11</div></div>
<div class="cl" style="left:71.2px;top:382.7px;width:55.3px;height:4.300000000000011px"><div class="c" style="left:0.5px;top:1.25px;color:#ffffff;font-size:7.4px;font-weight:bold;-webkit-text-stroke:0.08px currentColor;transform:scaleX(0.955)">09:55:16.18</div></div>
<div class="cl" style="left:320.5px;top:382.7px;width:23.49999999999999px;height:4.300000000000011px"><div class="c" style="left:0.5px;top:1.25px;color:#ffffff;font-size:7.4px;font-weight:bold;-webkit-text-stroke:0.08px currentColor;transform:scaleX(0.88)">A</div></div>
<div class="cl" style="left:345.2px;top:382.7px;width:44.3px;height:4.300000000000011px"><div class="c" style="left:0.5px;top:1.25px;color:#ffffff;font-size:7.4px;font-weight:bold;-webkit-text-stroke:0.08px currentColor;transform:scaleX(0.88)">BALANCE-BE</div></div>
<div class="cl" style="left:414.7px;top:382.7px;width:91.40000000000002px;height:4.300000000000011px"><div class="c" style="left:0.5px;top:1.25px;color:#ffffff;font-size:7.4px;font-weight:bold;-webkit-text-stroke:0.08px currentColor;transform:scaleX(0.88)">BALANCE-BEAM-30</div></div>
<div class="cl" style="left:507.3px;top:382.7px;width:55.20000000000003px;height:4.300000000000011px"><div class="c" style="left:0.5px;top:1.25px;color:#ffffff;font-size:7.4px;font-weight:bold;-webkit-text-stroke:0.08px currentColor;transform:scaleX(0.955)">00:00:30.00</div></div>
<div class="cl" style="left:563.7px;top:382.7px;width:55.59999999999995px;height:4.300000000000011px"><div class="c" style="left:0.5px;top:1.25px;color:#ffffff;font-size:7.4px;font-weight:bold;-webkit-text-stroke:0.08px currentColor;transform:scaleX(0.955)">00:00:00.00</div></div>
<div class="cl" style="left:662.5px;top:382.7px;width:8.500000000000046px;height:4.300000000000011px"><div class="c" style="left:0.5px;top:1.25px;color:#dcc6a2;font-size:7.4px;font-weight:bold;-webkit-text-stroke:0.08px currentColor;transform:scaleX(0.88)">Y</div></div>
<div class="cl" style="left:672.2px;top:382.7px;width:9.3px;height:4.300000000000011px"><div class="c" style="left:0.5px;top:1.25px;color:#ffffff;font-size:7.4px;font-weight:bold;-webkit-text-stroke:0.08px currentColor;transform:scaleX(0.88)">S</div></div>
<div class="cl" style="left:715.4px;top:382.7px;width:15.650000000000023px;height:4.300000000000011px"><div class="c" style="left:0.5px;top:1.25px;color:#ffffff;font-size:7.4px;font-weight:bold;-webkit-text-stroke:0.08px currentColor;transform:scaleX(0.955)">0</div></div>
<div class="a" style="left:36px;top:283.8px;width:1px;height:103.2px;background:#4a4a4a"></div>
<div class="a" style="left:758px;top:283.8px;width:8px;height:103.2px;background:#4f524f"></div>
<svg class="a" style="left:758px;top:286.5px" width="8" height="6" viewBox="0 0 8 6"><path d="M1.5 4.5 L4 2 L6.5 4.5 Z" fill="#ddd"/></svg>
<div class="a" style="left:760px;top:293.5px;width:4px;height:10px;background:#7a7a7a"></div>
<svg class="a" style="left:513.1px;top:275.8px" width="7.8" height="10.9" viewBox="0 0 10 14"><path d="M1 1 L1 12 L3.8 9.5 L6 13.5 L7.8 12.7 L5.7 8.8 L9 8.6 Z" fill="#fff" stroke="#111" stroke-width="0.7"/></svg>
<div class="a" style="left:30px;top:387px;width:743px;height:22px;background:linear-gradient(#3e3839,#2d2829)"></div></body></html>
